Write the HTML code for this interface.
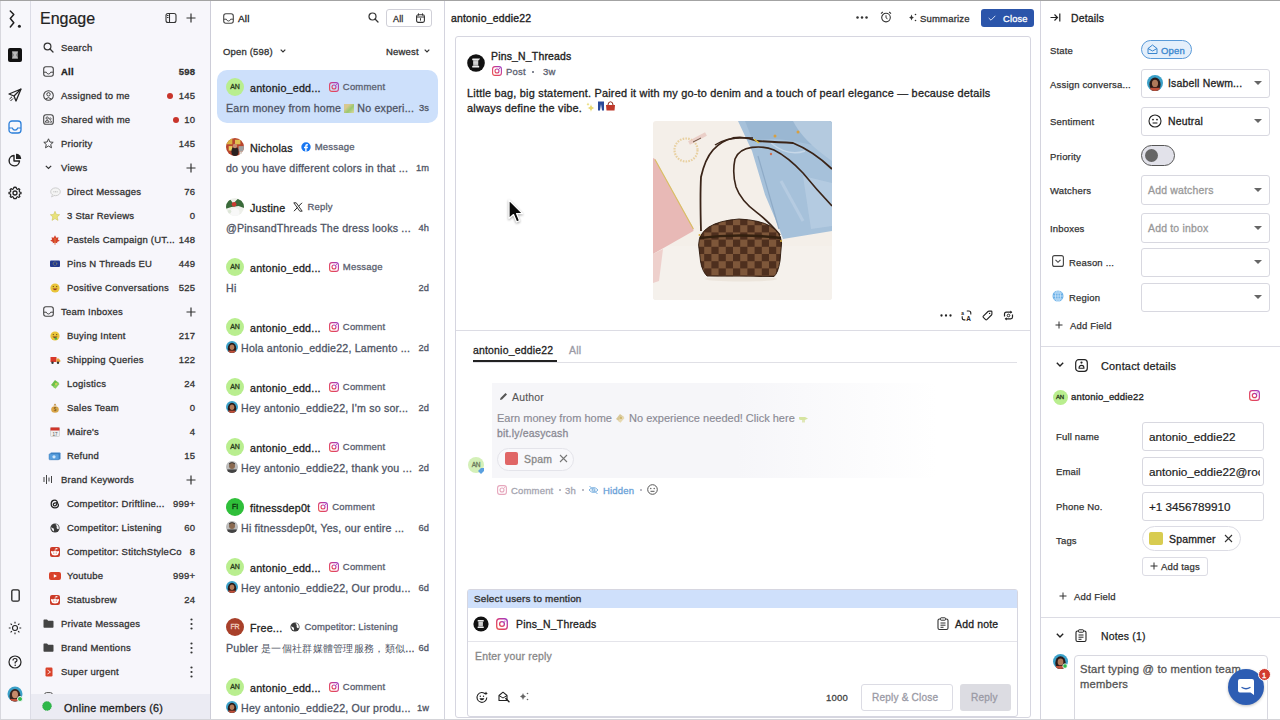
<!DOCTYPE html>
<html><head><meta charset="utf-8">
<style>
*{box-sizing:border-box}
html,body{margin:0;padding:0}
body{width:1280px;height:720px;overflow:hidden;position:relative;font-family:"Liberation Sans",sans-serif;color:#2a2a2e;background:#fff}
.a{position:absolute;white-space:nowrap}
.t{font-size:10px;line-height:12px;color:#333}
.a{-webkit-text-stroke:0.2px currentColor}
svg{display:block;overflow:visible}
.ic{position:absolute}
</style></head><body>
<div class="a" style="left:0;top:0;width:31px;height:720px;background:#f7f7fb;border-right:1px solid #dcdce6"></div>
<div class="a" style="left:31px;top:0;width:180px;height:720px;background:#f7f6fb;border-right:1px solid #cdcdd8"></div>
<div class="a" style="left:211px;top:0;width:234px;height:720px;background:#fff;border-right:1px solid #d4d4de"></div>
<div class="a" style="left:445px;top:0;width:596px;height:720px;background:#fff;border-right:1px solid #d4d4de"></div>
<div class="a" style="left:1041px;top:0;width:239px;height:720px;background:#fff"></div>
<svg width="0" height="0" style="position:absolute"><defs><linearGradient id="igg" x1="0" y1="1" x2="1" y2="0"><stop offset="0" stop-color="#e8504a"/><stop offset=".5" stop-color="#d83a78"/><stop offset="1" stop-color="#9a3ac8"/></linearGradient></defs></svg>
<svg class="ic" style="left:0px;top:0px" width="1" height="720" viewBox="0 0 1 720"><rect width="1" height="720" fill="#d8d8de"/></svg>
<svg class="ic" style="left:8px;top:10px" width="14" height="19" viewBox="0 0 14 19"><path d="M2.3 1L5.8 4.6L2.3 8.6L5.8 12.8L2.3 17" fill="none" stroke="#1f1f1f" stroke-width="1.5" stroke-linecap="round" stroke-linejoin="round"/><circle cx="11.4" cy="16.2" r="1.5" fill="#1f1f1f"/></svg>
<svg class="ic" style="left:8px;top:48px" width="14" height="14" viewBox="0 0 14 14"><rect x="0" y="0" width="14" height="14" rx="2" fill="#111"/><rect x="4" y="3.5" width="6" height="7" fill="#777"/><path d="M4 3.5H10L8 7L10 10.5H4L6 7Z" fill="#bbb"/></svg>
<svg class="ic" style="left:8px;top:88px" width="14" height="14" viewBox="0 0 14 14"><path d="M13 1L1 6L6 8L8 13Z" fill="none" stroke="#222" stroke-width="1.3" stroke-linejoin="round"/><path d="M13 1L6 8" stroke="#222" stroke-width="1.2"/><path d="M1.5 11L4 8.8M2.5 13L5 10.5" stroke="#222" stroke-width="1"/></svg>
<svg class="ic" style="left:8px;top:120px" width="14" height="14" viewBox="0 0 14 14"><rect x="1" y="1" width="12" height="12" rx="3" fill="none" stroke="#2b7fd9" stroke-width="1.3"/><path d="M1 8H4.3Q5 10.2 7 10.2Q9 10.2 9.7 8H13" fill="none" stroke="#2b7fd9" stroke-width="1.2"/></svg>
<svg class="ic" style="left:8px;top:153px" width="14" height="14" viewBox="0 0 14 14"><path d="M6 2.5A5.2 5.2 0 1 0 11.5 8H6Z" fill="none" stroke="#222" stroke-width="1.4" stroke-linejoin="round"/><path d="M8 0.8A5 5 0 0 1 13.2 6H8Z" fill="#222"/></svg>
<svg class="ic" style="left:8px;top:186px" width="14" height="14" viewBox="0 0 14 14"><circle cx="7" cy="7" r="2" fill="none" stroke="#222" stroke-width="1.3"/><path d="M7 1.2L8.2 1.4L8.5 2.8L9.7 3.4L10.9 2.6L11.8 3.5L11.2 4.8L11.6 6L13 6.3V7.7L11.6 8L11.2 9.3L11.9 10.5L10.9 11.4L9.7 10.7L8.5 11.2L8.2 12.6H5.8L5.5 11.2L4.3 10.6L3.1 11.4L2.2 10.5L2.8 9.2L2.4 8L1 7.7V6.3L2.4 6L2.8 4.8L2.1 3.5L3.1 2.6L4.3 3.4L5.5 2.8L5.8 1.4Z" fill="none" stroke="#222" stroke-width="1.2" stroke-linejoin="round"/></svg>
<svg class="ic" style="left:11px;top:589px" width="9" height="13" viewBox="0 0 9 13"><rect x="0.8" y="0.8" width="7.4" height="11.4" rx="1.5" fill="none" stroke="#222" stroke-width="1.3"/></svg>
<svg class="ic" style="left:8px;top:621px" width="14" height="14" viewBox="0 0 14 14"><circle cx="7" cy="7" r="2.5" fill="none" stroke="#222" stroke-width="1.1"/><path d="M7 0.8V2.6M7 11.4V13.2M0.8 7H2.6M11.4 7H13.2M2.6 2.6L3.9 3.9M10.1 10.1L11.4 11.4M2.6 11.4L3.9 10.1M10.1 3.9L11.4 2.6" stroke="#222" stroke-width="1.1"/></svg>
<svg class="ic" style="left:8px;top:655px" width="14" height="14" viewBox="0 0 14 14"><circle cx="7" cy="7" r="6" fill="none" stroke="#222" stroke-width="1.2"/><path d="M5 5.4Q5 3.5 7 3.5Q9 3.5 9 5.2Q9 6.4 7.2 7.1V8.4" fill="none" stroke="#222" stroke-width="1.2"/><circle cx="7.2" cy="10.3" r=".8" fill="#222"/></svg>
<svg class="ic" style="left:7px;top:686px" width="16" height="16" viewBox="0 0 16 16"><defs><clipPath id="avc"><circle cx="8" cy="8" r="7.5"/></clipPath></defs><g clip-path="url(#avc)"><rect width="16" height="16" fill="#3aa0c8"/><ellipse cx="8" cy="10" rx="5.5" ry="7" fill="#3a2420"/><ellipse cx="8" cy="8.5" rx="3" ry="3.8" fill="#c98a6a"/><rect x="3" y="13" width="10" height="4" fill="#c0503a"/></g><circle cx="13" cy="13" r="2.5" fill="#2fb84a" stroke="#f6f6fa" stroke-width="1"/></svg><div class="a" style="left:40px;top:10px;font-size:16px;line-height:18px;color:#222">Engage</div>
<svg class="ic" style="left:165px;top:12px" width="12" height="12" viewBox="0 0 12 12"><rect x="1" y="1.5" width="10" height="9" rx="2" fill="none" stroke="#333" stroke-width="1.1"/><line x1="4.5" y1="1.5" x2="4.5" y2="10.5" stroke="#333" stroke-width="1.1"/><rect x="2" y="3" width="1.5" height="1" fill="#333"/><rect x="2" y="5" width="1.5" height="1" fill="#333"/></svg>
<svg class="ic" style="left:186px;top:13px" width="10" height="10" viewBox="0 0 10 10"><path d="M5 0.5V9.5M0.5 5H9.5" stroke="#333" stroke-width="1.2"/></svg>
<svg class="ic" style="left:43px;top:42px" width="11" height="11" viewBox="0 0 11 11"><circle cx="4.5" cy="4.5" r="3.4" fill="none" stroke="#333" stroke-width="1.2"/><path d="M7 7L10 10" stroke="#333" stroke-width="1.3" stroke-linecap="round"/></svg>
<div class="a" style="left:61px;top:42.4px;font-size:9.5px;letter-spacing:0.24px;line-height:12px;color:#333;font-weight:normal;-webkit-text-stroke:0.3px #333;">Search</div>
<svg class="ic" style="left:43px;top:66px" width="11" height="11" viewBox="0 0 11 11"><rect x="0.7" y="0.7" width="9.6" height="9.6" rx="2.2" fill="none" stroke="#444" stroke-width="1.1"/><path d="M0.8 6.2H3.3Q4 8 5.5 8Q7 8 7.7 6.2H10.2" fill="none" stroke="#444" stroke-width="1"/></svg>
<div class="a" style="left:61px;top:66.4px;font-size:9.5px;letter-spacing:0.24px;line-height:12px;color:#222;font-weight:bold;-webkit-text-stroke:0.3px #222;">All</div>
<div class="a" style="left:135px;width:60px;text-align:right;top:66.4px;font-size:9.5px;letter-spacing:0.18px;margin-left:0.18px;line-height:12px;color:#333;font-weight:bold;-webkit-text-stroke:0.3px #333">598</div>
<svg class="ic" style="left:43px;top:90px" width="11" height="11" viewBox="0 0 11 11"><circle cx="5.5" cy="5.5" r="4.8" fill="none" stroke="#444" stroke-width="1.1"/><circle cx="5.5" cy="4.3" r="1.7" fill="none" stroke="#444" stroke-width="1"/><path d="M2.6 9Q5.5 6.2 8.4 9" fill="none" stroke="#444" stroke-width="1"/></svg>
<div class="a" style="left:61px;top:90.4px;font-size:9.5px;letter-spacing:0.24px;line-height:12px;color:#333;font-weight:normal;-webkit-text-stroke:0.3px #333;">Assigned to me</div>
<div class="a" style="left:167px;top:93px;width:6px;height:6px;border-radius:3px;background:#c8342b"></div>
<div class="a" style="left:135px;width:60px;text-align:right;top:90.4px;font-size:9.5px;letter-spacing:0.18px;margin-left:0.18px;line-height:12px;color:#333;font-weight:normal;-webkit-text-stroke:0.3px #333">145</div>
<svg class="ic" style="left:43px;top:114px" width="11" height="11" viewBox="0 0 11 11"><rect x="0.7" y="0.7" width="9.6" height="9.6" rx="2.4" fill="none" stroke="#444" stroke-width="1.1"/><circle cx="4.2" cy="4.1" r="1.2" fill="none" stroke="#444" stroke-width=".9"/><path d="M2.3 8.2Q2.3 6.4 4.2 6.4Q6.1 6.4 6.1 8.2Z" fill="none" stroke="#444" stroke-width=".9"/><circle cx="7.3" cy="4.8" r=".9" fill="none" stroke="#444" stroke-width=".8"/><path d="M6.8 8.2H8.6Q8.6 6.6 7.3 6.6" fill="none" stroke="#444" stroke-width=".8"/></svg>
<div class="a" style="left:61px;top:114.4px;font-size:9.5px;letter-spacing:0.24px;line-height:12px;color:#333;font-weight:normal;-webkit-text-stroke:0.3px #333;">Shared with me</div>
<div class="a" style="left:173px;top:117px;width:6px;height:6px;border-radius:3px;background:#c8342b"></div>
<div class="a" style="left:135px;width:60px;text-align:right;top:114.4px;font-size:9.5px;letter-spacing:0.18px;margin-left:0.18px;line-height:12px;color:#333;font-weight:normal;-webkit-text-stroke:0.3px #333">10</div>
<svg class="ic" style="left:43px;top:138px" width="11" height="11" viewBox="0 0 11 11"><path d="M5.5 0.8L6.9 4L10.2 4.3L7.7 6.5L8.5 9.8L5.5 8L2.5 9.8L3.3 6.5L0.8 4.3L4.1 4Z" fill="none" stroke="#444" stroke-width="1" stroke-linejoin="round"/></svg>
<div class="a" style="left:61px;top:138.4px;font-size:9.5px;letter-spacing:0.24px;line-height:12px;color:#333;font-weight:normal;-webkit-text-stroke:0.3px #333;">Priority</div>
<div class="a" style="left:135px;width:60px;text-align:right;top:138.4px;font-size:9.5px;letter-spacing:0.18px;margin-left:0.18px;line-height:12px;color:#333;font-weight:normal;-webkit-text-stroke:0.3px #333">145</div>
<svg class="ic" style="left:45px;top:165px" width="7" height="5" viewBox="0 0 7 5"><path d="M0.8 0.8L3.5 3.5L6.2 0.8" fill="none" stroke="#333" stroke-width="1.2"/></svg>
<div class="a" style="left:61px;top:162.4px;font-size:9.5px;letter-spacing:0.24px;line-height:12px;color:#333;font-weight:normal;-webkit-text-stroke:0.3px #333;">Views</div>
<svg class="ic" style="left:186px;top:163px" width="10" height="10" viewBox="0 0 10 10"><path d="M5 0.5V9.5M0.5 5H9.5" stroke="#333" stroke-width="1.2"/></svg>
<svg class="ic" style="left:50px;top:187px" width="11" height="11" viewBox="0 0 11 11"><ellipse cx="5.5" cy="4.8" rx="4.8" ry="3.9" fill="#f4f4f4" stroke="#c4c4c4" stroke-width="0.8"/><path d="M2.5 7.6L1.5 10L4.5 8.4" fill="#f4f4f4" stroke="#c4c4c4" stroke-width=".7"/><path d="M3.5 4.8H7.5" stroke="#999" stroke-width=".8" stroke-dasharray=".8 .8"/></svg>
<div class="a" style="left:67px;top:186.4px;font-size:9.5px;letter-spacing:0.24px;line-height:12px;color:#333;font-weight:normal;-webkit-text-stroke:0.3px #333;">Direct Messages</div>
<div class="a" style="left:135px;width:60px;text-align:right;top:186.4px;font-size:9.5px;letter-spacing:0.18px;margin-left:0.18px;line-height:12px;color:#333;font-weight:normal;-webkit-text-stroke:0.3px #333">76</div>
<svg class="ic" style="left:50px;top:211px" width="10" height="10" viewBox="0 0 10 10"><path d="M5 0.3L6.4 3.4L9.7 3.7L7.2 5.9L8 9.4L5 7.6L2 9.4L2.8 5.9L0.3 3.7L3.6 3.4Z" fill="#e9e27a" stroke="#c7bf4a" stroke-width="0.5"/></svg>
<div class="a" style="left:67px;top:210.4px;font-size:9.5px;letter-spacing:0.24px;line-height:12px;color:#333;font-weight:normal;-webkit-text-stroke:0.3px #333;">3 Star Reviews</div>
<div class="a" style="left:135px;width:60px;text-align:right;top:210.4px;font-size:9.5px;letter-spacing:0.18px;margin-left:0.18px;line-height:12px;color:#333;font-weight:normal;-webkit-text-stroke:0.3px #333">0</div>
<svg class="ic" style="left:50px;top:235px" width="10" height="10" viewBox="0 0 10 10"><path d="M5 0.3L6.4 2.8L8.5 2.2L7.9 4.6L9.8 5.8L7 7L7.5 8.2L5.4 7.8V9.8H4.6V7.8L2.5 8.2L3 7L0.2 5.8L2.1 4.6L1.5 2.2L3.6 2.8Z" fill="#d4402a"/><path d="M5 3L5 8" stroke="#e8a040" stroke-width=".6"/></svg>
<div class="a" style="left:67px;top:234.4px;font-size:9.5px;letter-spacing:0.24px;line-height:12px;color:#333;font-weight:normal;-webkit-text-stroke:0.3px #333;">Pastels Campaign (UT...</div>
<div class="a" style="left:135px;width:60px;text-align:right;top:234.4px;font-size:9.5px;letter-spacing:0.18px;margin-left:0.18px;line-height:12px;color:#333;font-weight:normal;-webkit-text-stroke:0.3px #333">148</div>
<svg class="ic" style="left:50px;top:260px" width="10" height="7" viewBox="0 0 10 7"><rect x="0" y="0.5" width="10" height="6.5" rx="1" fill="#233a8f"/><circle cx="5" cy="3.7" r="1.8" fill="none" stroke="#e8d440" stroke-width="0.6" stroke-dasharray="0.6 0.6"/></svg>
<div class="a" style="left:67px;top:258.4px;font-size:9.5px;letter-spacing:0.24px;line-height:12px;color:#333;font-weight:normal;-webkit-text-stroke:0.3px #333;">Pins N Threads EU</div>
<div class="a" style="left:135px;width:60px;text-align:right;top:258.4px;font-size:9.5px;letter-spacing:0.18px;margin-left:0.18px;line-height:12px;color:#333;font-weight:normal;-webkit-text-stroke:0.3px #333">449</div>
<svg class="ic" style="left:50px;top:283px" width="10" height="10" viewBox="0 0 10 10"><circle cx="5" cy="5" r="4.6" fill="#e9c43a"/><path d="M2.5 5.5Q5 9 7.5 5.5" fill="#9a3a1f"/><circle cx="3.3" cy="3.6" r=".6" fill="#5a3a10"/><circle cx="6.7" cy="3.6" r=".6" fill="#5a3a10"/></svg>
<div class="a" style="left:67px;top:282.4px;font-size:9.5px;letter-spacing:0.24px;line-height:12px;color:#333;font-weight:normal;-webkit-text-stroke:0.3px #333;">Positive Conversations</div>
<div class="a" style="left:135px;width:60px;text-align:right;top:282.4px;font-size:9.5px;letter-spacing:0.18px;margin-left:0.18px;line-height:12px;color:#333;font-weight:normal;-webkit-text-stroke:0.3px #333">525</div>
<svg class="ic" style="left:43px;top:306px" width="11" height="11" viewBox="0 0 11 11"><rect x="0.7" y="0.7" width="9.6" height="9.6" rx="2.2" fill="none" stroke="#444" stroke-width="1.1"/><path d="M0.8 6.2H3.3Q4 8 5.5 8Q7 8 7.7 6.2H10.2" fill="none" stroke="#444" stroke-width="1"/></svg>
<div class="a" style="left:61px;top:306.4px;font-size:9.5px;letter-spacing:0.24px;line-height:12px;color:#333;font-weight:normal;-webkit-text-stroke:0.3px #333;">Team Inboxes</div>
<svg class="ic" style="left:186px;top:307px" width="10" height="10" viewBox="0 0 10 10"><path d="M5 0.5V9.5M0.5 5H9.5" stroke="#333" stroke-width="1.2"/></svg>
<svg class="ic" style="left:50px;top:331px" width="10" height="10" viewBox="0 0 10 10"><circle cx="5" cy="5" r="4.6" fill="#e9c43a"/><path d="M2.5 5.5Q5 8.5 7.5 5.5Z" fill="#7a3a1f"/><ellipse cx="5.8" cy="7.6" rx="1.3" ry="1.2" fill="#4bb04b"/><circle cx="3.3" cy="3.6" r=".6" fill="#5a3a10"/><circle cx="6.7" cy="3.6" r=".6" fill="#5a3a10"/></svg>
<div class="a" style="left:67px;top:330.4px;font-size:9.5px;letter-spacing:0.24px;line-height:12px;color:#333;font-weight:normal;-webkit-text-stroke:0.3px #333;">Buying Intent</div>
<div class="a" style="left:135px;width:60px;text-align:right;top:330.4px;font-size:9.5px;letter-spacing:0.18px;margin-left:0.18px;line-height:12px;color:#333;font-weight:normal;-webkit-text-stroke:0.3px #333">217</div>
<svg class="ic" style="left:50px;top:355px" width="11" height="10" viewBox="0 0 11 10"><rect x="0.5" y="2" width="6" height="5" fill="#d8382a"/><path d="M6.5 3.5H8.8L10.3 5.5V7H6.5Z" fill="#e8a33a"/><circle cx="2.5" cy="7.8" r="1.2" fill="#333"/><circle cx="8" cy="7.8" r="1.2" fill="#333"/></svg>
<div class="a" style="left:67px;top:354.4px;font-size:9.5px;letter-spacing:0.24px;line-height:12px;color:#333;font-weight:normal;-webkit-text-stroke:0.3px #333;">Shipping Queries</div>
<div class="a" style="left:135px;width:60px;text-align:right;top:354.4px;font-size:9.5px;letter-spacing:0.18px;margin-left:0.18px;line-height:12px;color:#333;font-weight:normal;-webkit-text-stroke:0.3px #333">122</div>
<svg class="ic" style="left:50px;top:379px" width="10" height="10" viewBox="0 0 10 10"><path d="M1 6L5 1L9 4L5 9Z" fill="#6cbf4a"/><path d="M3 8L7 3L9.5 5L5.5 9.7Z" fill="#8bd060"/><circle cx="6" cy="5" r="1" fill="#e0d050"/></svg>
<div class="a" style="left:67px;top:378.4px;font-size:9.5px;letter-spacing:0.24px;line-height:12px;color:#333;font-weight:normal;-webkit-text-stroke:0.3px #333;">Logistics</div>
<div class="a" style="left:135px;width:60px;text-align:right;top:378.4px;font-size:9.5px;letter-spacing:0.18px;margin-left:0.18px;line-height:12px;color:#333;font-weight:normal;-webkit-text-stroke:0.3px #333">24</div>
<svg class="ic" style="left:50px;top:403px" width="10" height="10" viewBox="0 0 10 10"><path d="M3.5 2.5L5 0.5L6.5 2.5Z" fill="#b9832f"/><ellipse cx="5" cy="6.5" rx="3.8" ry="3.3" fill="#d9a64a"/><text x="5" y="8.3" font-size="4.5" text-anchor="middle" fill="#6a4a10" font-family="Liberation Sans">$</text></svg>
<div class="a" style="left:67px;top:402.4px;font-size:9.5px;letter-spacing:0.24px;line-height:12px;color:#333;font-weight:normal;-webkit-text-stroke:0.3px #333;">Sales Team</div>
<div class="a" style="left:135px;width:60px;text-align:right;top:402.4px;font-size:9.5px;letter-spacing:0.18px;margin-left:0.18px;line-height:12px;color:#333;font-weight:normal;-webkit-text-stroke:0.3px #333">0</div>
<svg class="ic" style="left:50px;top:427px" width="10" height="10" viewBox="0 0 10 10"><rect x="0.5" y="0.5" width="9" height="9" rx="1" fill="#eee" stroke="#bbb" stroke-width=".5"/><rect x="0.5" y="0.5" width="9" height="3" fill="#d0352a"/><text x="5" y="8.6" font-size="4.5" text-anchor="middle" fill="#555" font-family="Liberation Sans">17</text></svg>
<div class="a" style="left:67px;top:426.4px;font-size:9.5px;letter-spacing:0.24px;line-height:12px;color:#333;font-weight:normal;-webkit-text-stroke:0.3px #333;">Maire's</div>
<div class="a" style="left:135px;width:60px;text-align:right;top:426.4px;font-size:9.5px;letter-spacing:0.18px;margin-left:0.18px;line-height:12px;color:#333;font-weight:normal;-webkit-text-stroke:0.3px #333">4</div>
<svg class="ic" style="left:49px;top:452px" width="12" height="8" viewBox="0 0 12 8"><rect x="1.5" y="0.5" width="10" height="7" rx="0.8" fill="#3f84c9"/><rect x="0" y="1.8" width="10" height="6" rx="0.8" fill="#5aa0df" stroke="#2a6aa9" stroke-width=".4"/><circle cx="5" cy="4.8" r="1.6" fill="#cfe6fb"/></svg>
<div class="a" style="left:67px;top:450.4px;font-size:9.5px;letter-spacing:0.24px;line-height:12px;color:#333;font-weight:normal;-webkit-text-stroke:0.3px #333;">Refund</div>
<div class="a" style="left:135px;width:60px;text-align:right;top:450.4px;font-size:9.5px;letter-spacing:0.18px;margin-left:0.18px;line-height:12px;color:#333;font-weight:normal;-webkit-text-stroke:0.3px #333">15</div>
<svg class="ic" style="left:43px;top:474px" width="11" height="11" viewBox="0 0 11 11"><path d="M1 3V8M3.5 1V10M6 3.5V7.5M8.5 2V9" stroke="#444" stroke-width="1"/></svg>
<div class="a" style="left:61px;top:474.4px;font-size:9.5px;letter-spacing:0.24px;line-height:12px;color:#333;font-weight:normal;-webkit-text-stroke:0.3px #333;">Brand Keywords</div>
<svg class="ic" style="left:186px;top:475px" width="10" height="10" viewBox="0 0 10 10"><path d="M5 0.5V9.5M0.5 5H9.5" stroke="#333" stroke-width="1.2"/></svg>
<svg class="ic" style="left:50px;top:499px" width="10" height="10" viewBox="0 0 10 10"><path d="M7.6 4.2C7.2 2.2 6 1.2 4.9 1.2C2.6 1.2 1.2 2.9 1.2 5C1.2 7.4 2.7 8.8 5 8.8C7 8.8 8.4 7.6 8.4 6C8.4 4.4 6.9 3.8 5.3 3.9C4 4 3.2 4.8 3.3 5.7C3.4 6.5 4.2 6.9 5 6.8C6.4 6.7 6.9 5.4 6.7 3.2" fill="none" stroke="#222" stroke-width="1.3"/></svg>
<div class="a" style="left:67px;top:498.4px;font-size:9.5px;letter-spacing:0.24px;line-height:12px;color:#333;font-weight:normal;-webkit-text-stroke:0.3px #333;">Competitor: Driftline...</div>
<div class="a" style="left:135px;width:60px;text-align:right;top:498.4px;font-size:9.5px;letter-spacing:0.18px;margin-left:0.18px;line-height:12px;color:#333;font-weight:normal;-webkit-text-stroke:0.3px #333">999+</div>
<svg class="ic" style="left:50px;top:523px" width="10" height="10" viewBox="0 0 10 10"><circle cx="5" cy="5" r="4.6" fill="#3a3a3a"/><path d="M5.5 1.5Q7 2.5 6.8 4Q6 5 7.5 6Q8.5 6.5 8.9 5.2Q9 2.5 7 1.2Z" fill="#f0f0f4"/><path d="M1.5 4Q2.5 5.5 3.5 5.3Q4.5 6.5 3.8 8.5Q2 7.5 1.4 5.5Z" fill="#f0f0f4"/></svg>
<div class="a" style="left:67px;top:522.4px;font-size:9.5px;letter-spacing:0.24px;line-height:12px;color:#333;font-weight:normal;-webkit-text-stroke:0.3px #333;">Competitor: Listening</div>
<div class="a" style="left:135px;width:60px;text-align:right;top:522.4px;font-size:9.5px;letter-spacing:0.18px;margin-left:0.18px;line-height:12px;color:#333;font-weight:normal;-webkit-text-stroke:0.3px #333">60</div>
<svg class="ic" style="left:50px;top:547px" width="10" height="10" viewBox="0 0 10 10"><rect x="0" y="0" width="10" height="10" rx="2" fill="#cc3b28"/><ellipse cx="5" cy="6.2" rx="3.4" ry="2.2" fill="#fff"/><circle cx="1.8" cy="5" r=".9" fill="#fff"/><circle cx="8.2" cy="5" r=".9" fill="#fff"/><circle cx="3.8" cy="6" r=".6" fill="#cc3b28"/><circle cx="6.2" cy="6" r=".6" fill="#cc3b28"/><circle cx="6.8" cy="1.8" r=".8" fill="#fff"/><path d="M5 4L5.5 1.6L6.8 1.8" fill="none" stroke="#fff" stroke-width=".6"/></svg>
<div class="a" style="left:67px;top:546.4px;font-size:9.5px;letter-spacing:0.24px;line-height:12px;color:#333;font-weight:normal;-webkit-text-stroke:0.3px #333;">Competitor: StitchStyleCo</div>
<div class="a" style="left:135px;width:60px;text-align:right;top:546.4px;font-size:9.5px;letter-spacing:0.18px;margin-left:0.18px;line-height:12px;color:#333;font-weight:normal;-webkit-text-stroke:0.3px #333">8</div>
<svg class="ic" style="left:49px;top:572px" width="12" height="8" viewBox="0 0 12 8"><rect x="0" y="0" width="12" height="8" rx="2" fill="#d9412a"/><path d="M4.8 2.2L8 4L4.8 5.8Z" fill="#fff"/></svg>
<div class="a" style="left:67px;top:570.4px;font-size:9.5px;letter-spacing:0.24px;line-height:12px;color:#333;font-weight:normal;-webkit-text-stroke:0.3px #333;">Youtube</div>
<div class="a" style="left:135px;width:60px;text-align:right;top:570.4px;font-size:9.5px;letter-spacing:0.18px;margin-left:0.18px;line-height:12px;color:#333;font-weight:normal;-webkit-text-stroke:0.3px #333">999+</div>
<svg class="ic" style="left:50px;top:595px" width="10" height="10" viewBox="0 0 10 10"><rect x="0" y="0" width="10" height="10" rx="2" fill="#cc3b28"/><ellipse cx="5" cy="6.2" rx="3.4" ry="2.2" fill="#fff"/><circle cx="1.8" cy="5" r=".9" fill="#fff"/><circle cx="8.2" cy="5" r=".9" fill="#fff"/><circle cx="3.8" cy="6" r=".6" fill="#cc3b28"/><circle cx="6.2" cy="6" r=".6" fill="#cc3b28"/><circle cx="6.8" cy="1.8" r=".8" fill="#fff"/><path d="M5 4L5.5 1.6L6.8 1.8" fill="none" stroke="#fff" stroke-width=".6"/></svg>
<div class="a" style="left:67px;top:594.4px;font-size:9.5px;letter-spacing:0.24px;line-height:12px;color:#333;font-weight:normal;-webkit-text-stroke:0.3px #333;">Statusbrew</div>
<div class="a" style="left:135px;width:60px;text-align:right;top:594.4px;font-size:9.5px;letter-spacing:0.18px;margin-left:0.18px;line-height:12px;color:#333;font-weight:normal;-webkit-text-stroke:0.3px #333">24</div>
<svg class="ic" style="left:43px;top:619px" width="11" height="9" viewBox="0 0 11 9"><path d="M0.5 1.2Q0.5 0.5 1.2 0.5H4L5.2 1.8H9.8Q10.5 1.8 10.5 2.5V8Q10.5 8.7 9.8 8.7H1.2Q0.5 8.7 0.5 8Z" fill="#444"/></svg>
<div class="a" style="left:61px;top:618.4px;font-size:9.5px;letter-spacing:0.24px;line-height:12px;color:#333;font-weight:normal;-webkit-text-stroke:0.3px #333;">Private Messages</div>
<svg class="ic" style="left:190px;top:618px" width="3" height="12" viewBox="0 0 3 12"><circle cx="1.5" cy="1.5" r="1.1" fill="#333"/><circle cx="1.5" cy="6" r="1.1" fill="#333"/><circle cx="1.5" cy="10.5" r="1.1" fill="#333"/></svg>
<svg class="ic" style="left:43px;top:643px" width="11" height="9" viewBox="0 0 11 9"><path d="M0.5 1.2Q0.5 0.5 1.2 0.5H4L5.2 1.8H9.8Q10.5 1.8 10.5 2.5V8Q10.5 8.7 9.8 8.7H1.2Q0.5 8.7 0.5 8Z" fill="#444"/></svg>
<div class="a" style="left:61px;top:642.4px;font-size:9.5px;letter-spacing:0.24px;line-height:12px;color:#333;font-weight:normal;-webkit-text-stroke:0.3px #333;">Brand Mentions</div>
<svg class="ic" style="left:190px;top:642px" width="3" height="12" viewBox="0 0 3 12"><circle cx="1.5" cy="1.5" r="1.1" fill="#333"/><circle cx="1.5" cy="6" r="1.1" fill="#333"/><circle cx="1.5" cy="10.5" r="1.1" fill="#333"/></svg>
<svg class="ic" style="left:45px;top:667px" width="8" height="10" viewBox="0 0 8 10"><rect x="0.5" y="0.5" width="7" height="9" rx="1.2" fill="#d9412a"/><path d="M2.5 3L5.5 5L2.5 7" fill="none" stroke="#fff" stroke-width=".8"/></svg>
<div class="a" style="left:61px;top:666.4px;font-size:9.5px;letter-spacing:0.24px;line-height:12px;color:#333;font-weight:normal;-webkit-text-stroke:0.3px #333;">Super urgent</div>
<svg class="ic" style="left:190px;top:666px" width="3" height="12" viewBox="0 0 3 12"><circle cx="1.5" cy="1.5" r="1.1" fill="#333"/><circle cx="1.5" cy="6" r="1.1" fill="#333"/><circle cx="1.5" cy="10.5" r="1.1" fill="#333"/></svg>
<svg class="ic" style="left:44px;top:692px" width="9" height="9" viewBox="0 0 9 9"><rect x="0.6" y="0.6" width="7.8" height="7.8" rx="2" fill="none" stroke="#555" stroke-width="1"/></svg>
<div class="a" style="left:61px;top:693.4px;font-size:9.5px;letter-spacing:0.24px;line-height:12px;color:#444;font-weight:normal;-webkit-text-stroke:0.3px #444;">Sensitive</div>
<div class="a" style="left:31px;top:694px;width:179px;height:25px;background:#ebebf3"></div>
<svg class="ic" style="left:42px;top:701px" width="10" height="10" viewBox="0 0 10 10"><circle cx="5" cy="5" r="4.5" fill="#2fb84a"/><circle cx="5" cy="5" r="4.5" fill="none" stroke="#1e9a38" stroke-width=".6" stroke-dasharray="1 1"/></svg>
<div class="a" style="left:64px;top:701.9px;font-size:10.735px;letter-spacing:0.24px;line-height:12px;color:#222;font-weight:normal;-webkit-text-stroke:0.3px #222;">Online members (6)</div><svg class="ic" style="left:223px;top:13px" width="11" height="11" viewBox="0 0 11 11"><rect x="0.7" y="0.7" width="9.6" height="9.6" rx="2.2" fill="none" stroke="#444" stroke-width="1.1"/><path d="M0.8 6.2H3.3Q4 8 5.5 8Q7 8 7.7 6.2H10.2" fill="none" stroke="#444" stroke-width="1"/></svg>
<div class="a" style="left:238px;top:12.9px;font-size:9.97px;letter-spacing:0.189px;line-height:12px;color:#222;font-weight:normal;-webkit-text-stroke:0.3px #222;">All</div>
<svg class="ic" style="left:368px;top:12px" width="11" height="11" viewBox="0 0 11 11"><circle cx="4.5" cy="4.5" r="3.5" fill="none" stroke="#333" stroke-width="1.2"/><path d="M7 7L10 10" stroke="#333" stroke-width="1.3" stroke-linecap="round"/></svg>
<div class="a" style="left:386px;top:9px;width:46px;height:18px;border:1px solid #d0d0d8;border-radius:3px;background:#fff"></div>
<div class="a" style="left:393px;top:12.9px;font-size:9.03px;letter-spacing:0.171px;line-height:12px;color:#333;font-weight:normal;-webkit-text-stroke:0.3px #333;">All</div>
<svg class="ic" style="left:416px;top:13px" width="9" height="10" viewBox="0 0 9 10"><rect x="0.6" y="1.8" width="7.8" height="7.6" rx="1.6" fill="none" stroke="#333" stroke-width="1.1"/><path d="M2.5 0.4V2.6M6.5 0.4V2.6M0.8 4H8.2" stroke="#333" stroke-width="1"/><path d="M4.5 5.2V7.6" stroke="#333" stroke-width="1"/></svg>
<div class="a" style="left:223px;top:45.9px;font-size:9.5px;letter-spacing:0.18px;line-height:12px;color:#333;font-weight:normal;-webkit-text-stroke:0.3px #333;">Open (598)</div>
<svg class="ic" style="left:280px;top:49px" width="6" height="4" viewBox="0 0 6 4"><path d="M0.7 0.7L3 3L5.3 0.7" fill="none" stroke="#333" stroke-width="1.2"/></svg>
<div class="a" style="left:386px;top:45.9px;font-size:9.5px;letter-spacing:0.18px;line-height:12px;color:#333;font-weight:normal;-webkit-text-stroke:0.3px #333;">Newest</div>
<svg class="ic" style="left:424px;top:49px" width="6" height="4" viewBox="0 0 6 4"><path d="M0.7 0.7L3 3L5.3 0.7" fill="none" stroke="#333" stroke-width="1.2"/></svg>
<div class="a" style="left:217px;top:70px;width:221px;height:53px;background:#cde0fb;border-radius:10px"></div>
<div class="a" style="left:226px;top:78px;width:18px;height:18px;border-radius:50%;background:#b9ee8f;color:#2a3a1a;font-size:7px;line-height:18px;text-align:center;letter-spacing:-0.2px;-webkit-text-stroke:0.3px #2a3a1a">AN</div>
<div class="a" style="left:250px;top:81.9px;font-size:10.73px;letter-spacing:0.203px;line-height:12px;color:#222;font-weight:normal;-webkit-text-stroke:0.3px #222;-webkit-text-stroke:0.3px #222">antonio_edd...</div>
<svg class="ic" style="left:328.846875px;top:82px" width="10" height="10" viewBox="0 0 10 10"><rect x="0.6" y="0.6" width="8.8" height="8.8" rx="2.4" fill="none" stroke="url(#igg)" stroke-width="1.1"/><circle cx="5" cy="5" r="2" fill="none" stroke="url(#igg)" stroke-width="1.1"/><circle cx="7.4" cy="2.6" r=".55" fill="#b03aa0"/></svg>
<div class="a" style="left:342.846875px;top:81.4px;font-size:9.5px;letter-spacing:0.18px;line-height:12px;color:#5b6170;font-weight:normal;-webkit-text-stroke:0.3px #5b6170;">Comment</div>
<div class="a" style="left:226px;top:101.9px;font-size:10.64px;letter-spacing:0.202px;line-height:12px;color:#4f5565;font-weight:normal;-webkit-text-stroke:0.3px #4f5565;width:188px;overflow:hidden">Earn money from home <span style="display:inline-block;width:10px;height:9px;vertical-align:-1px;background:linear-gradient(135deg,#d8c890 30%,#9ac870 60%,#e0d8a0)"></span> No experi...</div>
<div class="a" style="left:369.176px;width:60px;text-align:right;top:101.9px;font-size:9.31px;letter-spacing:0.176px;line-height:12px;color:#4f5565;font-weight:normal;-webkit-text-stroke:0.3px #4f5565">3s</div>
<svg class="ic" style="left:226px;top:138px" width="18" height="18" viewBox="0 0 20 20"><defs><clipPath id="cnich147"><circle cx="10" cy="10" r="10"/></clipPath></defs><g clip-path="url(#cnich147)"><rect width="20" height="20" fill="#b8452e"/><rect x="0" y="0" width="7" height="7" fill="#d8b040"/><rect x="10" y="2" width="6" height="5" fill="#e0c050"/><rect x="3" y="9" width="4" height="5" fill="#e8d060"/><rect x="14" y="9" width="6" height="6" fill="#a0a0a0"/><ellipse cx="10" cy="15" rx="4" ry="6" fill="#2a2020"/><circle cx="10" cy="9" r="2.5" fill="#c89070"/><rect x="15" y="15" width="5" height="5" fill="#d8d8d0"/></g></svg>
<div class="a" style="left:250px;top:141.9px;font-size:10.73px;letter-spacing:0.203px;line-height:12px;color:#222;font-weight:normal;-webkit-text-stroke:0.3px #222;-webkit-text-stroke:0.3px #222">Nicholas</div>
<svg class="ic" style="left:300.7875px;top:142px" width="10" height="10" viewBox="0 0 10 10"><circle cx="5" cy="5" r="4.7" fill="#1877f2"/><path d="M5.6 9.7V6.2H6.8L7 4.8H5.6V4Q5.6 3.4 6.2 3.4H7V2.2Q6.5 2.1 5.9 2.1Q4.2 2.1 4.2 3.8V4.8H3V6.2H4.2V9.7Z" fill="#fff"/></svg>
<div class="a" style="left:314.7875px;top:141.4px;font-size:9.5px;letter-spacing:0.18px;line-height:12px;color:#5b6170;font-weight:normal;-webkit-text-stroke:0.3px #5b6170;">Message</div>
<div class="a" style="left:226px;top:161.9px;font-size:10.64px;letter-spacing:0.202px;line-height:12px;color:#4f5565;font-weight:normal;-webkit-text-stroke:0.3px #4f5565;width:188px;overflow:hidden">do you have different colors in that ...</div>
<div class="a" style="left:369.176px;width:60px;text-align:right;top:161.9px;font-size:9.31px;letter-spacing:0.176px;line-height:12px;color:#4f5565;font-weight:normal;-webkit-text-stroke:0.3px #4f5565">1m</div>
<svg class="ic" style="left:226px;top:198px" width="18" height="18" viewBox="0 0 20 20"><defs><clipPath id="cjust207"><circle cx="10" cy="10" r="10"/></clipPath></defs><g clip-path="url(#cjust207)"><rect width="20" height="20" fill="#eef0ea"/><path d="M0 4L5 2L8 6L13 1L20 4V11L14 9L6 10L0 12Z" fill="#3a6a3a"/><circle cx="9" cy="7" r="2.6" fill="#c83a30"/><ellipse cx="10" cy="16" rx="5" ry="5" fill="#f8f8f8"/><circle cx="4" cy="15" r="2" fill="#dde6d8"/></g></svg>
<div class="a" style="left:250px;top:201.9px;font-size:10.73px;letter-spacing:0.203px;line-height:12px;color:#222;font-weight:normal;-webkit-text-stroke:0.3px #222;-webkit-text-stroke:0.3px #222">Justine</div>
<svg class="ic" style="left:293.43125px;top:202px" width="10" height="10" viewBox="0 0 10 10"><path d="M0.8 0.8H3.2L9.2 9.2H6.8Z" fill="none" stroke="#222" stroke-width=".9"/><path d="M1 9.2L4.6 5.3M5.5 4.3L9 0.8" stroke="#222" stroke-width="1"/></svg>
<div class="a" style="left:307.43125px;top:201.4px;font-size:9.5px;letter-spacing:0.18px;line-height:12px;color:#5b6170;font-weight:normal;-webkit-text-stroke:0.3px #5b6170;">Reply</div>
<div class="a" style="left:226px;top:221.9px;font-size:10.64px;letter-spacing:0.202px;line-height:12px;color:#4f5565;font-weight:normal;-webkit-text-stroke:0.3px #4f5565;width:188px;overflow:hidden">@PinsandThreads The dress looks ...</div>
<div class="a" style="left:369.176px;width:60px;text-align:right;top:221.9px;font-size:9.31px;letter-spacing:0.176px;line-height:12px;color:#4f5565;font-weight:normal;-webkit-text-stroke:0.3px #4f5565">4h</div>
<div class="a" style="left:226px;top:258px;width:18px;height:18px;border-radius:50%;background:#b9ee8f;color:#2a3a1a;font-size:7px;line-height:18px;text-align:center;letter-spacing:-0.2px;-webkit-text-stroke:0.3px #2a3a1a">AN</div>
<div class="a" style="left:250px;top:261.9px;font-size:10.73px;letter-spacing:0.203px;line-height:12px;color:#222;font-weight:normal;-webkit-text-stroke:0.3px #222;-webkit-text-stroke:0.3px #222">antonio_edd...</div>
<svg class="ic" style="left:328.846875px;top:262px" width="10" height="10" viewBox="0 0 10 10"><rect x="0.6" y="0.6" width="8.8" height="8.8" rx="2.4" fill="none" stroke="url(#igg)" stroke-width="1.1"/><circle cx="5" cy="5" r="2" fill="none" stroke="url(#igg)" stroke-width="1.1"/><circle cx="7.4" cy="2.6" r=".55" fill="#b03aa0"/></svg>
<div class="a" style="left:342.846875px;top:261.4px;font-size:9.5px;letter-spacing:0.18px;line-height:12px;color:#5b6170;font-weight:normal;-webkit-text-stroke:0.3px #5b6170;">Message</div>
<div class="a" style="left:226px;top:281.9px;font-size:10.64px;letter-spacing:0.202px;line-height:12px;color:#4f5565;font-weight:normal;-webkit-text-stroke:0.3px #4f5565;width:188px;overflow:hidden">Hi</div>
<div class="a" style="left:369.176px;width:60px;text-align:right;top:281.9px;font-size:9.31px;letter-spacing:0.176px;line-height:12px;color:#4f5565;font-weight:normal;-webkit-text-stroke:0.3px #4f5565">2d</div>
<div class="a" style="left:226px;top:318px;width:18px;height:18px;border-radius:50%;background:#b9ee8f;color:#2a3a1a;font-size:7px;line-height:18px;text-align:center;letter-spacing:-0.2px;-webkit-text-stroke:0.3px #2a3a1a">AN</div>
<div class="a" style="left:250px;top:321.9px;font-size:10.73px;letter-spacing:0.203px;line-height:12px;color:#222;font-weight:normal;-webkit-text-stroke:0.3px #222;-webkit-text-stroke:0.3px #222">antonio_edd...</div>
<svg class="ic" style="left:328.846875px;top:322px" width="10" height="10" viewBox="0 0 10 10"><rect x="0.6" y="0.6" width="8.8" height="8.8" rx="2.4" fill="none" stroke="url(#igg)" stroke-width="1.1"/><circle cx="5" cy="5" r="2" fill="none" stroke="url(#igg)" stroke-width="1.1"/><circle cx="7.4" cy="2.6" r=".55" fill="#b03aa0"/></svg>
<div class="a" style="left:342.846875px;top:321.4px;font-size:9.5px;letter-spacing:0.18px;line-height:12px;color:#5b6170;font-weight:normal;-webkit-text-stroke:0.3px #5b6170;">Comment</div>
<svg class="ic" style="left:226px;top:341px" width="12" height="12" viewBox="0 0 20 20"><defs><clipPath id="cwoman347"><circle cx="10" cy="10" r="10"/></clipPath></defs><g clip-path="url(#cwoman347)"><rect width="20" height="20" fill="#3aa0c8"/><ellipse cx="10" cy="12" rx="7" ry="9" fill="#2a1a18"/><ellipse cx="10" cy="10.5" rx="3.8" ry="4.6" fill="#b07a5a"/><rect x="4" y="16" width="12" height="5" fill="#c0503a"/></g></svg>
<div class="a" style="left:241px;top:341.9px;font-size:10.64px;letter-spacing:0.202px;line-height:12px;color:#4f5565;font-weight:normal;-webkit-text-stroke:0.3px #4f5565;width:173px;overflow:hidden">Hola antonio_eddie22, Lamento ...</div>
<div class="a" style="left:369.176px;width:60px;text-align:right;top:341.9px;font-size:9.31px;letter-spacing:0.176px;line-height:12px;color:#4f5565;font-weight:normal;-webkit-text-stroke:0.3px #4f5565">2d</div>
<div class="a" style="left:226px;top:378px;width:18px;height:18px;border-radius:50%;background:#b9ee8f;color:#2a3a1a;font-size:7px;line-height:18px;text-align:center;letter-spacing:-0.2px;-webkit-text-stroke:0.3px #2a3a1a">AN</div>
<div class="a" style="left:250px;top:381.9px;font-size:10.73px;letter-spacing:0.203px;line-height:12px;color:#222;font-weight:normal;-webkit-text-stroke:0.3px #222;-webkit-text-stroke:0.3px #222">antonio_edd...</div>
<svg class="ic" style="left:328.846875px;top:382px" width="10" height="10" viewBox="0 0 10 10"><rect x="0.6" y="0.6" width="8.8" height="8.8" rx="2.4" fill="none" stroke="url(#igg)" stroke-width="1.1"/><circle cx="5" cy="5" r="2" fill="none" stroke="url(#igg)" stroke-width="1.1"/><circle cx="7.4" cy="2.6" r=".55" fill="#b03aa0"/></svg>
<div class="a" style="left:342.846875px;top:381.4px;font-size:9.5px;letter-spacing:0.18px;line-height:12px;color:#5b6170;font-weight:normal;-webkit-text-stroke:0.3px #5b6170;">Comment</div>
<svg class="ic" style="left:226px;top:401px" width="12" height="12" viewBox="0 0 20 20"><defs><clipPath id="cwoman407"><circle cx="10" cy="10" r="10"/></clipPath></defs><g clip-path="url(#cwoman407)"><rect width="20" height="20" fill="#3aa0c8"/><ellipse cx="10" cy="12" rx="7" ry="9" fill="#2a1a18"/><ellipse cx="10" cy="10.5" rx="3.8" ry="4.6" fill="#b07a5a"/><rect x="4" y="16" width="12" height="5" fill="#c0503a"/></g></svg>
<div class="a" style="left:241px;top:401.9px;font-size:10.64px;letter-spacing:0.202px;line-height:12px;color:#4f5565;font-weight:normal;-webkit-text-stroke:0.3px #4f5565;width:173px;overflow:hidden">Hey antonio_eddie22, I'm so sor...</div>
<div class="a" style="left:369.176px;width:60px;text-align:right;top:401.9px;font-size:9.31px;letter-spacing:0.176px;line-height:12px;color:#4f5565;font-weight:normal;-webkit-text-stroke:0.3px #4f5565">2d</div>
<div class="a" style="left:226px;top:438px;width:18px;height:18px;border-radius:50%;background:#b9ee8f;color:#2a3a1a;font-size:7px;line-height:18px;text-align:center;letter-spacing:-0.2px;-webkit-text-stroke:0.3px #2a3a1a">AN</div>
<div class="a" style="left:250px;top:441.9px;font-size:10.73px;letter-spacing:0.203px;line-height:12px;color:#222;font-weight:normal;-webkit-text-stroke:0.3px #222;-webkit-text-stroke:0.3px #222">antonio_edd...</div>
<svg class="ic" style="left:328.846875px;top:442px" width="10" height="10" viewBox="0 0 10 10"><rect x="0.6" y="0.6" width="8.8" height="8.8" rx="2.4" fill="none" stroke="url(#igg)" stroke-width="1.1"/><circle cx="5" cy="5" r="2" fill="none" stroke="url(#igg)" stroke-width="1.1"/><circle cx="7.4" cy="2.6" r=".55" fill="#b03aa0"/></svg>
<div class="a" style="left:342.846875px;top:441.4px;font-size:9.5px;letter-spacing:0.18px;line-height:12px;color:#5b6170;font-weight:normal;-webkit-text-stroke:0.3px #5b6170;">Comment</div>
<svg class="ic" style="left:226px;top:461px" width="12" height="12" viewBox="0 0 20 20"><defs><clipPath id="cman467"><circle cx="10" cy="10" r="10"/></clipPath></defs><g clip-path="url(#cman467)"><rect width="20" height="20" fill="#bbb"/><ellipse cx="10" cy="8" rx="5" ry="5.5" fill="#8a6a50"/><path d="M5 6Q10 1 15 6V4Q10 0 5 4Z" fill="#333"/><rect x="2" y="14" width="16" height="7" fill="#444"/></g></svg>
<div class="a" style="left:241px;top:461.9px;font-size:10.64px;letter-spacing:0.202px;line-height:12px;color:#4f5565;font-weight:normal;-webkit-text-stroke:0.3px #4f5565;width:173px;overflow:hidden">Hey antonio_eddie22, thank you ...</div>
<div class="a" style="left:369.176px;width:60px;text-align:right;top:461.9px;font-size:9.31px;letter-spacing:0.176px;line-height:12px;color:#4f5565;font-weight:normal;-webkit-text-stroke:0.3px #4f5565">2d</div>
<div class="a" style="left:226px;top:498px;width:18px;height:18px;border-radius:50%;background:#2fbf3a;color:#0a2a0a;font-size:7px;line-height:18px;text-align:center;letter-spacing:-0.2px;-webkit-text-stroke:0.3px #0a2a0a">FI</div>
<div class="a" style="left:250px;top:501.9px;font-size:10.73px;letter-spacing:0.203px;line-height:12px;color:#222;font-weight:normal;-webkit-text-stroke:0.3px #222;-webkit-text-stroke:0.3px #222">fitnessdep0t</div>
<svg class="ic" style="left:318.30625px;top:502px" width="10" height="10" viewBox="0 0 10 10"><rect x="0.6" y="0.6" width="8.8" height="8.8" rx="2.4" fill="none" stroke="url(#igg)" stroke-width="1.1"/><circle cx="5" cy="5" r="2" fill="none" stroke="url(#igg)" stroke-width="1.1"/><circle cx="7.4" cy="2.6" r=".55" fill="#b03aa0"/></svg>
<div class="a" style="left:332.30625px;top:501.4px;font-size:9.5px;letter-spacing:0.18px;line-height:12px;color:#5b6170;font-weight:normal;-webkit-text-stroke:0.3px #5b6170;">Comment</div>
<svg class="ic" style="left:226px;top:521px" width="12" height="12" viewBox="0 0 20 20"><defs><clipPath id="cman527"><circle cx="10" cy="10" r="10"/></clipPath></defs><g clip-path="url(#cman527)"><rect width="20" height="20" fill="#bbb"/><ellipse cx="10" cy="8" rx="5" ry="5.5" fill="#8a6a50"/><path d="M5 6Q10 1 15 6V4Q10 0 5 4Z" fill="#333"/><rect x="2" y="14" width="16" height="7" fill="#444"/></g></svg>
<div class="a" style="left:241px;top:521.9px;font-size:10.64px;letter-spacing:0.202px;line-height:12px;color:#4f5565;font-weight:normal;-webkit-text-stroke:0.3px #4f5565;width:173px;overflow:hidden">Hi fitnessdep0t, Yes, our entire ...</div>
<div class="a" style="left:369.176px;width:60px;text-align:right;top:521.9px;font-size:9.31px;letter-spacing:0.176px;line-height:12px;color:#4f5565;font-weight:normal;-webkit-text-stroke:0.3px #4f5565">6d</div>
<div class="a" style="left:226px;top:558px;width:18px;height:18px;border-radius:50%;background:#b9ee8f;color:#2a3a1a;font-size:7px;line-height:18px;text-align:center;letter-spacing:-0.2px;-webkit-text-stroke:0.3px #2a3a1a">AN</div>
<div class="a" style="left:250px;top:561.9px;font-size:10.73px;letter-spacing:0.203px;line-height:12px;color:#222;font-weight:normal;-webkit-text-stroke:0.3px #222;-webkit-text-stroke:0.3px #222">antonio_edd...</div>
<svg class="ic" style="left:328.846875px;top:562px" width="10" height="10" viewBox="0 0 10 10"><rect x="0.6" y="0.6" width="8.8" height="8.8" rx="2.4" fill="none" stroke="url(#igg)" stroke-width="1.1"/><circle cx="5" cy="5" r="2" fill="none" stroke="url(#igg)" stroke-width="1.1"/><circle cx="7.4" cy="2.6" r=".55" fill="#b03aa0"/></svg>
<div class="a" style="left:342.846875px;top:561.4px;font-size:9.5px;letter-spacing:0.18px;line-height:12px;color:#5b6170;font-weight:normal;-webkit-text-stroke:0.3px #5b6170;">Comment</div>
<svg class="ic" style="left:226px;top:581px" width="12" height="12" viewBox="0 0 20 20"><defs><clipPath id="cwoman587"><circle cx="10" cy="10" r="10"/></clipPath></defs><g clip-path="url(#cwoman587)"><rect width="20" height="20" fill="#3aa0c8"/><ellipse cx="10" cy="12" rx="7" ry="9" fill="#2a1a18"/><ellipse cx="10" cy="10.5" rx="3.8" ry="4.6" fill="#b07a5a"/><rect x="4" y="16" width="12" height="5" fill="#c0503a"/></g></svg>
<div class="a" style="left:241px;top:581.9px;font-size:10.64px;letter-spacing:0.202px;line-height:12px;color:#4f5565;font-weight:normal;-webkit-text-stroke:0.3px #4f5565;width:173px;overflow:hidden">Hey antonio_eddie22, Our produ...</div>
<div class="a" style="left:369.176px;width:60px;text-align:right;top:581.9px;font-size:9.31px;letter-spacing:0.176px;line-height:12px;color:#4f5565;font-weight:normal;-webkit-text-stroke:0.3px #4f5565">6d</div>
<div class="a" style="left:226px;top:618px;width:18px;height:18px;border-radius:50%;background:#a8402a;color:#f0d0c0;font-size:7px;line-height:18px;text-align:center;letter-spacing:-0.2px;-webkit-text-stroke:0.3px #f0d0c0">FR</div>
<div class="a" style="left:250px;top:621.9px;font-size:10.73px;letter-spacing:0.203px;line-height:12px;color:#222;font-weight:normal;-webkit-text-stroke:0.3px #222;-webkit-text-stroke:0.3px #222">Free...</div>
<svg class="ic" style="left:290.43125px;top:622px" width="10" height="10" viewBox="0 0 10 10"><circle cx="5" cy="5" r="4.6" fill="#3a3a3a"/><path d="M5.5 1.5Q7 2.5 6.8 4Q6 5 7.5 6Q8.5 6.5 8.9 5.2Q9 2.5 7 1.2Z" fill="#fff"/><path d="M1.5 4Q2.5 5.5 3.5 5.3Q4.5 6.5 3.8 8.5Q2 7.5 1.4 5.5Z" fill="#fff"/></svg>
<div class="a" style="left:304.43125px;top:621.4px;font-size:9.5px;letter-spacing:0.18px;line-height:12px;color:#5b6170;font-weight:normal;-webkit-text-stroke:0.3px #5b6170;">Competitor: Listening</div>
<div class="a" style="left:226px;top:641.9px;font-size:10.64px;letter-spacing:0.202px;line-height:12px;color:#4f5565;font-weight:normal;-webkit-text-stroke:0.3px #4f5565;width:188px;overflow:hidden">Publer <span style="letter-spacing:0.3px;font-size:9.6px;-webkit-text-stroke:0">是一個社群媒體管理服務，類似</span>...</div>
<div class="a" style="left:369.176px;width:60px;text-align:right;top:641.9px;font-size:9.31px;letter-spacing:0.176px;line-height:12px;color:#4f5565;font-weight:normal;-webkit-text-stroke:0.3px #4f5565">6d</div>
<div class="a" style="left:226px;top:678px;width:18px;height:18px;border-radius:50%;background:#b9ee8f;color:#2a3a1a;font-size:7px;line-height:18px;text-align:center;letter-spacing:-0.2px;-webkit-text-stroke:0.3px #2a3a1a">AN</div>
<div class="a" style="left:250px;top:681.9px;font-size:10.73px;letter-spacing:0.203px;line-height:12px;color:#222;font-weight:normal;-webkit-text-stroke:0.3px #222;-webkit-text-stroke:0.3px #222">antonio_edd...</div>
<svg class="ic" style="left:328.846875px;top:682px" width="10" height="10" viewBox="0 0 10 10"><rect x="0.6" y="0.6" width="8.8" height="8.8" rx="2.4" fill="none" stroke="url(#igg)" stroke-width="1.1"/><circle cx="5" cy="5" r="2" fill="none" stroke="url(#igg)" stroke-width="1.1"/><circle cx="7.4" cy="2.6" r=".55" fill="#b03aa0"/></svg>
<div class="a" style="left:342.846875px;top:681.4px;font-size:9.5px;letter-spacing:0.18px;line-height:12px;color:#5b6170;font-weight:normal;-webkit-text-stroke:0.3px #5b6170;">Comment</div>
<svg class="ic" style="left:226px;top:701px" width="12" height="12" viewBox="0 0 20 20"><defs><clipPath id="cwoman707"><circle cx="10" cy="10" r="10"/></clipPath></defs><g clip-path="url(#cwoman707)"><rect width="20" height="20" fill="#3aa0c8"/><ellipse cx="10" cy="12" rx="7" ry="9" fill="#2a1a18"/><ellipse cx="10" cy="10.5" rx="3.8" ry="4.6" fill="#b07a5a"/><rect x="4" y="16" width="12" height="5" fill="#c0503a"/></g></svg>
<div class="a" style="left:241px;top:701.9px;font-size:10.64px;letter-spacing:0.202px;line-height:12px;color:#4f5565;font-weight:normal;-webkit-text-stroke:0.3px #4f5565;width:173px;overflow:hidden">Hey antonio_eddie22, Our produ...</div>
<div class="a" style="left:369.176px;width:60px;text-align:right;top:701.9px;font-size:9.31px;letter-spacing:0.176px;line-height:12px;color:#4f5565;font-weight:normal;-webkit-text-stroke:0.3px #4f5565">1w</div><div class="a" style="left:451px;top:12.9px;font-size:10.45px;letter-spacing:0.198px;line-height:12px;color:#222;font-weight:normal;-webkit-text-stroke:0.3px #222;-webkit-text-stroke:0.35px currentColor;">antonio_eddie22</div>
<svg class="ic" style="left:856px;top:16px" width="12" height="3" viewBox="0 0 12 3"><circle cx="1.5" cy="1.5" r="1.25" fill="#333"/><circle cx="6" cy="1.5" r="1.25" fill="#333"/><circle cx="10.5" cy="1.5" r="1.25" fill="#333"/></svg>
<svg class="ic" style="left:880px;top:11px" width="12" height="12" viewBox="0 0 12 12"><circle cx="6" cy="6.6" r="4.3" fill="none" stroke="#333" stroke-width="1.1"/><path d="M6 4.3V6.8L7.5 7.8" fill="none" stroke="#333" stroke-width="1"/><path d="M1 2.6L2.8 1M11 2.6L9.2 1" stroke="#333" stroke-width="1.1"/></svg>
<svg class="ic" style="left:908px;top:13px" width="9" height="9" viewBox="0 0 9 9"><path d="M3.5 1.5Q3.9 4 6 4.5Q3.9 5 3.5 7.5Q3.1 5 1 4.5Q3.1 4 3.5 1.5Z" fill="#333"/><circle cx="7.5" cy="1.5" r=".8" fill="#333"/><circle cx="7.5" cy="7.5" r=".8" fill="#333"/></svg>
<div class="a" style="left:920px;top:12.9px;font-size:9.5px;letter-spacing:0.18px;line-height:12px;color:#333;font-weight:normal;-webkit-text-stroke:0.3px #333;">Summarize</div>
<div class="a" style="left:981px;top:9px;width:53px;height:18px;background:#2b55aa;border-radius:3px"></div>
<svg class="ic" style="left:988px;top:15px" width="8" height="6" viewBox="0 0 8 6"><path d="M0.7 3L3 5.2L7.3 0.8" fill="none" stroke="#e8eefa" stroke-width=".9"/></svg>
<div class="a" style="left:1003px;top:12.9px;font-size:9.31px;letter-spacing:0.176px;line-height:12px;color:#fff;font-weight:normal;-webkit-text-stroke:0.3px #fff;">Close</div>
<div class="a" style="left:455px;top:36px;width:576px;height:682px;border:1px solid #d6d6e0;border-radius:3px;background:#fff"></div>
<svg class="ic" style="left:467px;top:54px" width="18" height="18" viewBox="0 0 18 18"><circle cx="9" cy="9" r="8.8" fill="#111"/><rect x="5.2" y="4.6" width="7" height="1.6" rx=".5" fill="#eee"/><rect x="5.2" y="11.8" width="7" height="1.6" rx=".5" fill="#eee"/><rect x="6.2" y="6.2" width="5" height="5.6" fill="#bbb"/><path d="M6.2 7H11.2M6.2 8.4H11.2M6.2 9.8H11.2" stroke="#eee" stroke-width=".6"/><path d="M10 6.5L13 4.5" stroke="#ddd" stroke-width=".7"/></svg>
<div class="a" style="left:491px;top:50.9px;font-size:10.45px;letter-spacing:0.198px;line-height:12px;color:#222;font-weight:normal;-webkit-text-stroke:0.3px #222;-webkit-text-stroke:0.35px currentColor;">Pins_N_Threads</div>
<svg class="ic" style="left:492px;top:66px" width="10" height="10" viewBox="0 0 10 10"><rect x="0.6" y="0.6" width="8.8" height="8.8" rx="2.4" fill="none" stroke="url(#igg)" stroke-width="1.1"/><circle cx="5" cy="5" r="2" fill="none" stroke="url(#igg)" stroke-width="1.1"/><circle cx="7.4" cy="2.6" r=".55" fill="#b03aa0"/></svg>
<div class="a" style="left:506px;top:65.9px;font-size:9.5px;letter-spacing:0.18px;line-height:12px;color:#5b6170;font-weight:normal;-webkit-text-stroke:0.3px #5b6170;">Post</div>
<div class="a" style="left:532px;top:71px;width:2px;height:2px;background:#5b6170;border-radius:1px"></div>
<div class="a" style="left:543px;top:65.9px;font-size:9.5px;letter-spacing:0.18px;line-height:12px;color:#5b6170;font-weight:normal;-webkit-text-stroke:0.3px #5b6170;">3w</div>
<div class="a" style="left:467px;top:85.9px;font-size:10.92px;letter-spacing:0.207px;line-height:14px;color:#222;font-weight:normal;-webkit-text-stroke:0.3px #222;">Little bag, big statement. Paired it with my go-to denim and a touch of pearl elegance — because details</div>
<div class="a" style="left:467px;top:100.9px;font-size:10.92px;letter-spacing:0.207px;line-height:14px;color:#222;font-weight:normal;-webkit-text-stroke:0.3px #222;">always define the vibe.</div>
<svg class="ic" style="left:586px;top:102px" width="9" height="10" viewBox="0 0 9 10"><path d="M5 2Q5.3 5.5 8.5 6Q5.3 6.5 5 10Q4.7 6.5 1.5 6Q4.7 5.5 5 2Z" fill="#e8d870"/><path d="M2 0.5Q2.2 2 3.5 2.2Q2.2 2.4 2 4Q1.8 2.4 0.5 2.2Q1.8 2 2 0.5Z" fill="#e8d870"/></svg>
<svg class="ic" style="left:597px;top:101px" width="8" height="10" viewBox="0 0 8 10"><path d="M1 0.5H7V9.5H5L4 3L3 9.5H1Z" fill="#2a4a9a"/></svg>
<svg class="ic" style="left:605px;top:101px" width="11" height="10" viewBox="0 0 11 10"><path d="M3 4Q3 0.8 5.5 0.8Q8 0.8 8 4" fill="none" stroke="#8a2a1a" stroke-width="1"/><path d="M1 4H10L9.5 9.5H1.5Z" fill="#c0392b"/></svg>
<svg class="ic" style="left:653px;top:121px" width="179" height="179" viewBox="0 0 179 179">
<defs><clipPath id="ph"><rect width="179" height="179" rx="3"/></clipPath>
<clipPath id="bagc"><path d="M45.6 124Q46 101 86 98Q127 100 128.6 122L127 140Q125 152 121 155.5L54 155Q49 150 47.5 140Z"/></clipPath></defs>
<g clip-path="url(#ph)">
<rect width="179" height="179" fill="#f4efe9"/>
<rect y="125" width="179" height="54" fill="#f5f1ec"/>
<path d="M0 37L2 38L40.4 107L40.4 110L0 133Z" fill="#e8b9b6"/>
<path d="M0 133L10 128L6 160L0 162Z" fill="#eed0cc"/>
<path d="M2 38.5L40.4 108" stroke="#d8c060" stroke-width="1.1"/>
<circle cx="33" cy="29" r="11.5" fill="none" stroke="#e8d0a0" stroke-width="2.2" stroke-dasharray="1.6 1.2"/>
<path d="M36 22L53 13" stroke="#e8c8c0" stroke-width="4" opacity=".8"/>
<path d="M40 21L48 17" stroke="#6a5040" stroke-width="1"/>
<path d="M85 0H179V110L130 118L124.8 104L112 73.7L99 30Z" fill="#a6c1da"/>
<path d="M92 0H179V28L150 22Q120 15 100 20Z" fill="#9ab7d2"/>
<path d="M140 0Q150 20 179 40V0Z" fill="#b4cadf"/>
<path d="M118 22Q135 36 152 30" fill="none" stroke="#c6d7e8" stroke-width="1.5"/>
<path d="M105 35L126 108" stroke="#8eaac6" stroke-width="1.2"/>
<path d="M150 55L179 62V105L158 108Z" fill="#b8cde2" opacity=".8"/>
<path d="M128 60L150 100" stroke="#bcd0e4" stroke-width="3" opacity=".7"/>
<circle cx="122" cy="15" r="1.5" fill="#d8a040"/><circle cx="145" cy="11" r="1.5" fill="#d8a040"/><circle cx="118" cy="33" r="1.2" fill="#d07050"/>
<path d="M48 110Q47 75 48 56Q52 38 60 29Q68 20 80 17Q92 15 104 20Q125 21 140 22Q160 30 179 48" fill="none" stroke="#3a2418" stroke-width="1.8"/>
<path d="M62 24Q75 15 100 17" fill="none" stroke="#3a2418" stroke-width="1.5"/>
<path d="M127 114Q115 100 104 91.6Q88 80 83 66Q79 52 82 38Q86 28 99 26.4Q112 25 121 29Q135 36 150 52Q163 68 179 85" fill="none" stroke="#3a2418" stroke-width="1.6"/>
<path d="M101 18L106 22" stroke="#e0c040" stroke-width="1.6"/>
<path d="M45.6 124Q46 101 86 98Q127 100 128.6 122L127 140Q125 152 121 155.5L54 155Q49 150 47.5 140Z" fill="#7e573a"/>
<g clip-path="url(#bagc)" fill="#4e2f1e"><rect x="44.0" y="97.0" width="7.2" height="7.2"/><rect x="58.4" y="97.0" width="7.2" height="7.2"/><rect x="72.8" y="97.0" width="7.2" height="7.2"/><rect x="87.2" y="97.0" width="7.2" height="7.2"/><rect x="101.6" y="97.0" width="7.2" height="7.2"/><rect x="116.0" y="97.0" width="7.2" height="7.2"/><rect x="51.2" y="104.2" width="7.2" height="7.2"/><rect x="65.6" y="104.2" width="7.2" height="7.2"/><rect x="80.0" y="104.2" width="7.2" height="7.2"/><rect x="94.4" y="104.2" width="7.2" height="7.2"/><rect x="108.8" y="104.2" width="7.2" height="7.2"/><rect x="123.2" y="104.2" width="7.2" height="7.2"/><rect x="44.0" y="111.4" width="7.2" height="7.2"/><rect x="58.4" y="111.4" width="7.2" height="7.2"/><rect x="72.8" y="111.4" width="7.2" height="7.2"/><rect x="87.2" y="111.4" width="7.2" height="7.2"/><rect x="101.6" y="111.4" width="7.2" height="7.2"/><rect x="116.0" y="111.4" width="7.2" height="7.2"/><rect x="51.2" y="118.6" width="7.2" height="7.2"/><rect x="65.6" y="118.6" width="7.2" height="7.2"/><rect x="80.0" y="118.6" width="7.2" height="7.2"/><rect x="94.4" y="118.6" width="7.2" height="7.2"/><rect x="108.8" y="118.6" width="7.2" height="7.2"/><rect x="123.2" y="118.6" width="7.2" height="7.2"/><rect x="44.0" y="125.8" width="7.2" height="7.2"/><rect x="58.4" y="125.8" width="7.2" height="7.2"/><rect x="72.8" y="125.8" width="7.2" height="7.2"/><rect x="87.2" y="125.8" width="7.2" height="7.2"/><rect x="101.6" y="125.8" width="7.2" height="7.2"/><rect x="116.0" y="125.8" width="7.2" height="7.2"/><rect x="51.2" y="133.0" width="7.2" height="7.2"/><rect x="65.6" y="133.0" width="7.2" height="7.2"/><rect x="80.0" y="133.0" width="7.2" height="7.2"/><rect x="94.4" y="133.0" width="7.2" height="7.2"/><rect x="108.8" y="133.0" width="7.2" height="7.2"/><rect x="123.2" y="133.0" width="7.2" height="7.2"/><rect x="44.0" y="140.2" width="7.2" height="7.2"/><rect x="58.4" y="140.2" width="7.2" height="7.2"/><rect x="72.8" y="140.2" width="7.2" height="7.2"/><rect x="87.2" y="140.2" width="7.2" height="7.2"/><rect x="101.6" y="140.2" width="7.2" height="7.2"/><rect x="116.0" y="140.2" width="7.2" height="7.2"/><rect x="51.2" y="147.4" width="7.2" height="7.2"/><rect x="65.6" y="147.4" width="7.2" height="7.2"/><rect x="80.0" y="147.4" width="7.2" height="7.2"/><rect x="94.4" y="147.4" width="7.2" height="7.2"/><rect x="108.8" y="147.4" width="7.2" height="7.2"/><rect x="123.2" y="147.4" width="7.2" height="7.2"/><rect x="44.0" y="154.6" width="7.2" height="7.2"/><rect x="58.4" y="154.6" width="7.2" height="7.2"/><rect x="72.8" y="154.6" width="7.2" height="7.2"/><rect x="87.2" y="154.6" width="7.2" height="7.2"/><rect x="101.6" y="154.6" width="7.2" height="7.2"/><rect x="116.0" y="154.6" width="7.2" height="7.2"/></g>
<path d="M46.5 117Q87 112 128 117" fill="none" stroke="#33200f" stroke-width="2.6"/>
<path d="M45.6 124Q46 101 86 98Q127 100 128.6 122L127 140Q125 152 121 155.5L54 155Q49 150 47.5 140Z" fill="none" stroke="#2e1b10" stroke-width=".9"/>
<circle cx="46.5" cy="114" r="1" fill="#d8b040"/><circle cx="128" cy="120" r="1" fill="#d8b040"/>
<ellipse cx="88" cy="158" rx="36" ry="2.5" fill="#e6ddd2" opacity=".6"/>
</g></svg>
<svg class="ic" style="left:940px;top:314px" width="12" height="3" viewBox="0 0 12 3"><circle cx="1.5" cy="1.5" r="1.15" fill="#222"/><circle cx="6" cy="1.5" r="1.15" fill="#222"/><circle cx="10.5" cy="1.5" r="1.15" fill="#222"/></svg>
<svg class="ic" style="left:961px;top:310px" width="11" height="11" viewBox="0 0 11 11"><text x="0.3" y="4.6" font-size="4.8" fill="#222" font-family="Liberation Sans" font-weight="bold">a</text><text x="5.2" y="10.6" font-size="6.4" fill="#222" font-family="Liberation Sans" font-weight="bold">A</text><path d="M5.8 1H7.8Q9.8 1 9.8 3V4.5" fill="none" stroke="#222" stroke-width="1.1"/><path d="M1.2 6.2V7.8Q1.2 9.9 3.2 9.9H4.4" fill="none" stroke="#222" stroke-width="1.1"/></svg>
<svg class="ic" style="left:982px;top:310px" width="11" height="11" viewBox="0 0 11 11"><path d="M1.3 6.2L6 1.5Q6.4 1.1 7 1.1H9.2Q9.9 1.1 9.9 1.8V4Q9.9 4.6 9.5 5L4.8 9.7Q4.2 10.3 3.6 9.7L1.3 7.4Q0.7 6.8 1.3 6.2Z" fill="none" stroke="#222" stroke-width="1.1"/><circle cx="7.6" cy="3.4" r=".7" fill="#222"/></svg>
<svg class="ic" style="left:1003px;top:310px" width="11" height="11" viewBox="0 0 11 11"><path d="M1.5 6.5V4Q1.5 2.2 3.3 2.2H8.5" fill="none" stroke="#222" stroke-width="1.2"/><path d="M7.3 0.6L9.3 2.2L7.3 3.8Z" fill="#222"/><path d="M9.5 4.5V7Q9.5 8.8 7.7 8.8H2.5" fill="none" stroke="#222" stroke-width="1.2"/><path d="M3.7 7.2L1.7 8.8L3.7 10.4Z" fill="#222"/><circle cx="5.5" cy="5.5" r="1.3" fill="none" stroke="#222" stroke-width="1"/></svg>
<div class="a" style="left:456px;top:330px;width:574px;height:1px;background:#dcdce4"></div>
<div class="a" style="left:473px;top:344.9px;font-size:10.45px;letter-spacing:0.198px;line-height:12px;color:#222;font-weight:normal;-webkit-text-stroke:0.3px #222;">antonio_eddie22</div>
<div class="a" style="left:569px;top:344.9px;font-size:10.45px;letter-spacing:0.198px;line-height:12px;color:#9a9aa5;font-weight:normal;-webkit-text-stroke:0.3px #9a9aa5;">All</div>
<div class="a" style="left:473px;top:362px;width:544px;height:1px;background:#e0e0e6"></div>
<div class="a" style="left:473px;top:360px;width:84px;height:2px;background:#222"></div>
<div class="a" style="left:492px;top:383px;width:445px;height:95px;background:linear-gradient(90deg,#f6f6f9 0%,#f6f6f9 55%,rgba(246,246,249,0) 100%)"></div>
<svg class="ic" style="left:499px;top:392px" width="9" height="9" viewBox="0 0 9 9"><path d="M1 8L1.5 6L6.5 1L8 2.5L3 7.5Z" fill="#555"/></svg>
<div class="a" style="left:512px;top:391.9px;font-size:10.45px;letter-spacing:0.198px;line-height:12px;color:#555;font-weight:normal;-webkit-text-stroke:0.3px #555;-webkit-text-stroke:0.1px #555">Author</div>
<div class="a" style="left:497px;top:411px;font-size:11px;line-height:14px;color:#8a8a94;-webkit-text-stroke:0.15px #8a8a94">Earn money from home <svg style="display:inline-block;vertical-align:-1px" width="11" height="10" viewBox="0 0 11 10"><path d="M1 6L5 1L9 4L5 9Z" fill="#d8c898"/><path d="M3 8L7 3L9.5 5L5.5 9.7Z" fill="#e6d8b0"/><circle cx="6" cy="5" r="1" fill="#c8b060"/></svg> No experience needed! Click here <svg style="display:inline-block;vertical-align:-1px" width="12" height="9" viewBox="0 0 12 9"><path d="M1 3H7L10 4.5L7 6H3Q1 6 1 4.5Z" fill="#d6e4a0"/><path d="M4 6V8.5H7V6" fill="#e0e8b8"/></svg></div>
<div class="a" style="left:497px;top:427.9px;font-size:10.45px;letter-spacing:0.198px;line-height:12px;color:#8a8a94;font-weight:normal;-webkit-text-stroke:0.3px #8a8a94;">bit.ly/easycash</div>
<div class="a" style="left:497px;top:448px;width:77px;height:23px;border:1px solid #e4e4ea;border-radius:12px;background:#f8f8fb"></div>
<div class="a" style="left:505px;top:452px;width:13px;height:13px;background:#e06666;border-radius:2px"></div>
<div class="a" style="left:524px;top:453.9px;font-size:10.45px;letter-spacing:0.198px;line-height:12px;color:#888;font-weight:normal;-webkit-text-stroke:0.3px #888;">Spam</div>
<svg class="ic" style="left:559px;top:454px" width="9" height="9" viewBox="0 0 9 9"><path d="M1 1L8 8M8 1L1 8" stroke="#777" stroke-width="1.1"/></svg>
<div class="a" style="left:468px;top:457px;width:16px;height:16px;border-radius:50%;background:#d4f0b8;color:#6a7a5a;font-size:6.5px;line-height:16px;text-align:center;letter-spacing:-0.2px;-webkit-text-stroke:0.3px #6a7a5a">AN</div>
<svg class="ic" style="left:477px;top:467px" width="8" height="8" viewBox="0 0 8 8"><path d="M1 4L4 1H7V4L4 7Z" fill="#5aa0e0"/></svg>
<svg class="ic" style="left:497px;top:485px" width="10" height="10" viewBox="0 0 10 10"><rect x="0.6" y="0.6" width="8.8" height="8.8" rx="2.4" fill="none" stroke="#e6a6bc" stroke-width="1.1"/><circle cx="5" cy="5" r="2" fill="none" stroke="#e6a6bc" stroke-width="1.1"/><circle cx="7.4" cy="2.6" r=".55" fill="#e6a6bc"/></svg>
<div class="a" style="left:511px;top:484.9px;font-size:9.5px;letter-spacing:0.18px;line-height:12px;color:#a5a5b0;font-weight:normal;-webkit-text-stroke:0.3px #a5a5b0;">Comment</div>
<div class="a" style="left:559px;top:489px;width:2px;height:2px;background:#a5a5b0;border-radius:1px"></div>
<div class="a" style="left:565px;top:484.9px;font-size:9.5px;letter-spacing:0.18px;line-height:12px;color:#a5a5b0;font-weight:normal;-webkit-text-stroke:0.3px #a5a5b0;">3h</div>
<div class="a" style="left:582px;top:489px;width:2px;height:2px;background:#a5a5b0;border-radius:1px"></div>
<svg class="ic" style="left:588px;top:485px" width="11" height="10" viewBox="0 0 11 10"><path d="M1 5Q5.5 0 10 5Q5.5 10 1 5Z" fill="none" stroke="#7ab0e0" stroke-width="1"/><circle cx="5.5" cy="5" r="1.5" fill="none" stroke="#7ab0e0" stroke-width="1"/><path d="M1.5 1L9.5 9" stroke="#7ab0e0" stroke-width="1"/></svg>
<div class="a" style="left:603px;top:484.9px;font-size:9.5px;letter-spacing:0.18px;line-height:12px;color:#6aa2d8;font-weight:normal;-webkit-text-stroke:0.3px #6aa2d8;">Hidden</div>
<div class="a" style="left:640px;top:489px;width:2px;height:2px;background:#a5a5b0;border-radius:1px"></div>
<svg class="ic" style="left:647px;top:484px" width="11" height="11" viewBox="0 0 11 11"><circle cx="5.5" cy="5.5" r="4.8" fill="none" stroke="#555" stroke-width="1"/><circle cx="3.8" cy="4.5" r=".7" fill="#555"/><circle cx="7.2" cy="4.5" r=".7" fill="#555"/><path d="M3.5 7.3H7.5" stroke="#555" stroke-width="1"/></svg>
<div class="a" style="left:467px;top:589px;width:551px;height:128px;border:1px solid #d6d6e0;border-radius:3px;background:#fff;overflow:hidden"></div>
<div class="a" style="left:468px;top:590px;width:549px;height:18px;background:#cfe0fb"></div>
<div class="a" style="left:474px;top:593.4px;font-size:9.88px;letter-spacing:0.187px;line-height:12px;color:#333;font-weight:normal;-webkit-text-stroke:0.3px #333;-webkit-text-stroke:0.35px currentColor;">Select users to mention</div>
<svg class="ic" style="left:473px;top:616px" width="16" height="16" viewBox="0 0 16 16"><circle cx="8" cy="8" r="7.6" fill="#111"/><rect x="4.6" y="4" width="6.2" height="1.5" rx=".5" fill="#eee"/><rect x="4.6" y="10.5" width="6.2" height="1.5" rx=".5" fill="#eee"/><rect x="5.5" y="5.5" width="4.4" height="5" fill="#bbb"/><path d="M5.5 6.3H9.9M5.5 7.6H9.9M5.5 8.9H9.9" stroke="#eee" stroke-width=".5"/></svg>
<svg class="ic" style="left:496px;top:618px" width="12" height="12" viewBox="0 0 10 10"><rect x="0.6" y="0.6" width="8.8" height="8.8" rx="2.4" fill="none" stroke="url(#igg)" stroke-width="1.1"/><circle cx="5" cy="5" r="2" fill="none" stroke="url(#igg)" stroke-width="1.1"/><circle cx="7.4" cy="2.6" r=".55" fill="#b03aa0"/></svg>
<div class="a" style="left:516px;top:618.9px;font-size:10.45px;letter-spacing:0.198px;line-height:12px;color:#222;font-weight:normal;-webkit-text-stroke:0.3px #222;">Pins_N_Threads</div>
<svg class="ic" style="left:937px;top:617px" width="12" height="13" viewBox="0 0 12 13"><rect x="1" y="2" width="10" height="10.5" rx="1.5" fill="none" stroke="#333" stroke-width="1.1"/><rect x="3.5" y="0.8" width="5" height="2.4" rx=".6" fill="#fff" stroke="#333" stroke-width="1"/><path d="M3.5 6H8.5M3.5 8.2H8.5M3.5 10.3H6.5" stroke="#333" stroke-width="1"/></svg>
<div class="a" style="left:955px;top:618.9px;font-size:10.45px;letter-spacing:0.198px;line-height:12px;color:#222;font-weight:normal;-webkit-text-stroke:0.3px #222;">Add note</div>
<div class="a" style="left:468px;top:641px;width:549px;height:1px;background:#e4e4ea"></div>
<div class="a" style="left:475px;top:650.9px;font-size:10.45px;letter-spacing:0.198px;line-height:12px;color:#888;font-weight:normal;-webkit-text-stroke:0.3px #888;">Enter your reply</div>
<svg class="ic" style="left:476px;top:691px" width="12" height="12" viewBox="0 0 12 12"><path d="M9.6 3.2A4.9 4.9 0 1 0 10.8 6.5" fill="none" stroke="#222" stroke-width="1.1"/><circle cx="4.3" cy="5.2" r=".7" fill="#222"/><circle cx="7.5" cy="5.2" r=".7" fill="#222"/><path d="M3.4 7.2H8.4Q7.8 9.2 5.9 9.2Q4 9.2 3.4 7.2Z" fill="#222"/><path d="M10 0.6L10.6 1.8L11.8 2.4L10.6 3L10 4.2L9.4 3L8.2 2.4L9.4 1.8Z" fill="#222"/></svg>
<svg class="ic" style="left:498px;top:691px" width="12" height="12" viewBox="0 0 12 12"><path d="M1 4.5L5 1.2L9 4.5V9.5H1Z" fill="none" stroke="#222" stroke-width="1.1" stroke-linejoin="round"/><path d="M1 4.5L5 7L9 4.5" fill="none" stroke="#222" stroke-width="1"/><path d="M7.8 7.6L11 10.8" stroke="#222" stroke-width="1.4" stroke-linecap="round"/></svg>
<svg class="ic" style="left:519px;top:691px" width="11" height="11" viewBox="0 0 11 11"><path d="M4 2Q4.4 5 7 5.5Q4.4 6 4 9Q3.6 6 1 5.5Q3.6 5 4 2Z" fill="#666"/><circle cx="8.5" cy="2.5" r=".8" fill="#666"/><circle cx="8.5" cy="8.5" r=".8" fill="#666"/></svg>
<div class="a" style="left:826px;top:691.9px;font-size:9.5px;letter-spacing:0.18px;line-height:12px;color:#444;font-weight:normal;-webkit-text-stroke:0.3px #444;">1000</div>
<div class="a" style="left:861px;top:684px;width:92px;height:27px;border:1px solid #dcdce4;border-radius:3px;background:#fff"></div>
<div class="a" style="left:872px;top:691.9px;font-size:10.07px;letter-spacing:0.191px;line-height:12px;color:#9a9aa5;font-weight:normal;-webkit-text-stroke:0.3px #9a9aa5;">Reply &amp; Close</div>
<div class="a" style="left:960px;top:684px;width:51px;height:27px;background:#dcdce2;border-radius:3px"></div>
<div class="a" style="left:971px;top:691.9px;font-size:10.07px;letter-spacing:0.191px;line-height:12px;color:#9a9aa5;font-weight:normal;-webkit-text-stroke:0.3px #9a9aa5;">Reply</div>
<svg class="ic" style="left:506px;top:197px;filter:drop-shadow(0 1px 1.2px rgba(0,0,0,.35))" width="20" height="28" viewBox="0 0 20 28"><path d="M3 3L3 21.5L7.5 17.6L10.6 25L13.6 23.7L10.6 16.6L16.6 16.6Z" fill="#0a0a0a" stroke="#fff" stroke-width="1.3" stroke-linejoin="round"/></svg><svg class="ic" style="left:1050px;top:13px" width="11" height="9" viewBox="0 0 11 9"><path d="M0.5 4.5H7.5M4.5 1.5L7.5 4.5L4.5 7.5M9.8 0.5V8.5" fill="none" stroke="#222" stroke-width="1.2"/></svg>
<div class="a" style="left:1071px;top:12.9px;font-size:10.45px;letter-spacing:0.198px;line-height:12px;color:#222;font-weight:normal;-webkit-text-stroke:0.3px #222;">Details</div>
<div class="a" style="left:1050px;top:44.9px;font-size:9.5px;letter-spacing:0.18px;line-height:12px;color:#333;font-weight:normal;-webkit-text-stroke:0.3px #333;-webkit-text-stroke:0.25px currentColor;">State</div>
<div class="a" style="left:1141px;top:40px;width:51px;height:19px;border:1px solid #5a9ad8;border-radius:10px;background:#e4effb"></div>
<svg class="ic" style="left:1147px;top:44px" width="11" height="10" viewBox="0 0 11 10"><path d="M1 4.5L5.5 1L10 4.5V9.5H1Z" fill="none" stroke="#3a86cf" stroke-width="1"/><path d="M1 4.5L5.5 7L10 4.5" fill="none" stroke="#3a86cf" stroke-width="1"/></svg>
<div class="a" style="left:1161px;top:44.9px;font-size:9.5px;letter-spacing:0.18px;line-height:12px;color:#3a86cf;font-weight:normal;-webkit-text-stroke:0.3px #3a86cf;">Open</div>
<div class="a" style="left:1050px;top:78.9px;font-size:9.5px;letter-spacing:0.18px;line-height:12px;color:#333;font-weight:normal;-webkit-text-stroke:0.3px #333;-webkit-text-stroke:0.25px currentColor;">Assign conversa...</div>
<div class="a" style="left:1141px;top:69px;width:129px;height:29px;border:1px solid #d8d8e0;border-radius:3px;background:#fff"></div>
<svg class="ic" style="left:1254px;top:81px" width="8" height="4" viewBox="0 0 8 4"><path d="M0 0H8L4 4Z" fill="#666"/></svg>
<div class="a" style="left:1168px;top:78.4px;font-size:10.45px;letter-spacing:0.198px;line-height:12px;color:#222;font-weight:normal;-webkit-text-stroke:0.3px #222;">Isabell Newm...</div>
<svg class="ic" style="left:1147px;top:75px" width="16" height="16" viewBox="0 0 20 20"><defs><clipPath id="isb"><circle cx="10" cy="10" r="10"/></clipPath></defs><g clip-path="url(#isb)"><rect width="20" height="20" fill="#3aa0c8"/><ellipse cx="10" cy="12" rx="7" ry="9" fill="#2a1a18"/><ellipse cx="10" cy="10.5" rx="3.8" ry="4.6" fill="#b07a5a"/><rect x="4" y="16" width="12" height="5" fill="#c0503a"/></g></svg>
<div class="a" style="left:1050px;top:115.9px;font-size:9.5px;letter-spacing:0.18px;line-height:12px;color:#333;font-weight:normal;-webkit-text-stroke:0.3px #333;-webkit-text-stroke:0.25px currentColor;">Sentiment</div>
<div class="a" style="left:1141px;top:107px;width:129px;height:29px;border:1px solid #d8d8e0;border-radius:3px;background:#fff"></div>
<svg class="ic" style="left:1254px;top:119px" width="8" height="4" viewBox="0 0 8 4"><path d="M0 0H8L4 4Z" fill="#666"/></svg>
<div class="a" style="left:1168px;top:116.4px;font-size:10.45px;letter-spacing:0.198px;line-height:12px;color:#222;font-weight:normal;-webkit-text-stroke:0.3px #222;">Neutral</div>
<svg class="ic" style="left:1148px;top:114px" width="14" height="14" viewBox="0 0 14 14"><circle cx="7" cy="7" r="6" fill="none" stroke="#222" stroke-width="1.1"/><circle cx="5" cy="5.6" r=".9" fill="#222"/><circle cx="9" cy="5.6" r=".9" fill="#222"/><path d="M4.6 9H9.4" stroke="#222" stroke-width="1.1"/></svg>
<div class="a" style="left:1050px;top:150.9px;font-size:9.5px;letter-spacing:0.18px;line-height:12px;color:#333;font-weight:normal;-webkit-text-stroke:0.3px #333;-webkit-text-stroke:0.25px currentColor;">Priority</div>
<div class="a" style="left:1141px;top:145px;width:34px;height:21px;border:1.5px solid #555;border-radius:11px;background:#e2e2ea"></div>
<div class="a" style="left:1145px;top:149px;width:13px;height:13px;border-radius:50%;background:#666"></div>
<div class="a" style="left:1050px;top:184.9px;font-size:9.5px;letter-spacing:0.18px;line-height:12px;color:#333;font-weight:normal;-webkit-text-stroke:0.3px #333;-webkit-text-stroke:0.25px currentColor;">Watchers</div>
<div class="a" style="left:1141px;top:175px;width:129px;height:30px;border:1px solid #d8d8e0;border-radius:3px;background:#fff"></div>
<svg class="ic" style="left:1254px;top:188px" width="8" height="4" viewBox="0 0 8 4"><path d="M0 0H8L4 4Z" fill="#666"/></svg>
<div class="a" style="left:1148px;top:184.9px;font-size:10.45px;letter-spacing:0.198px;line-height:12px;color:#999;font-weight:normal;-webkit-text-stroke:0.3px #999;">Add watchers</div>
<div class="a" style="left:1050px;top:222.9px;font-size:9.5px;letter-spacing:0.18px;line-height:12px;color:#333;font-weight:normal;-webkit-text-stroke:0.3px #333;-webkit-text-stroke:0.25px currentColor;">Inboxes</div>
<div class="a" style="left:1141px;top:213px;width:129px;height:30px;border:1px solid #d8d8e0;border-radius:3px;background:#fff"></div>
<svg class="ic" style="left:1254px;top:226px" width="8" height="4" viewBox="0 0 8 4"><path d="M0 0H8L4 4Z" fill="#666"/></svg>
<div class="a" style="left:1148px;top:222.9px;font-size:10.45px;letter-spacing:0.198px;line-height:12px;color:#999;font-weight:normal;-webkit-text-stroke:0.3px #999;">Add to inbox</div>
<svg class="ic" style="left:1052px;top:255px" width="12" height="12" viewBox="0 0 12 12"><rect x="0.6" y="0.6" width="10.8" height="10.8" rx="2" fill="none" stroke="#444" stroke-width="1.1"/><path d="M3.5 4.8L6 7.3L8.5 4.8" fill="none" stroke="#444" stroke-width="1.1"/></svg>
<div class="a" style="left:1069px;top:256.9px;font-size:9.5px;letter-spacing:0.18px;line-height:12px;color:#333;font-weight:normal;-webkit-text-stroke:0.3px #333;-webkit-text-stroke:0.25px currentColor;">Reason ...</div>
<div class="a" style="left:1141px;top:248px;width:129px;height:29px;border:1px solid #d8d8e0;border-radius:3px;background:#fff"></div>
<svg class="ic" style="left:1254px;top:260px" width="8" height="4" viewBox="0 0 8 4"><path d="M0 0H8L4 4Z" fill="#666"/></svg>
<svg class="ic" style="left:1052px;top:290px" width="12" height="12" viewBox="0 0 12 12"><circle cx="6" cy="6" r="5.5" fill="#6ab0e8"/><path d="M0.5 6H11.5M6 0.5V11.5M2 3H10M2 9H10" stroke="#d8ecfb" stroke-width=".7"/><ellipse cx="6" cy="6" rx="2.5" ry="5.5" fill="none" stroke="#d8ecfb" stroke-width=".7"/></svg>
<div class="a" style="left:1069px;top:291.9px;font-size:9.5px;letter-spacing:0.18px;line-height:12px;color:#333;font-weight:normal;-webkit-text-stroke:0.3px #333;-webkit-text-stroke:0.25px currentColor;">Region</div>
<div class="a" style="left:1141px;top:283px;width:129px;height:29px;border:1px solid #d8d8e0;border-radius:3px;background:#fff"></div>
<svg class="ic" style="left:1254px;top:295px" width="8" height="4" viewBox="0 0 8 4"><path d="M0 0H8L4 4Z" fill="#666"/></svg>
<svg class="ic" style="left:1055px;top:321px" width="8" height="8" viewBox="0 0 8 8"><path d="M4 0.5V7.5M0.5 4H7.5" stroke="#333" stroke-width="1"/></svg>
<div class="a" style="left:1070px;top:319.9px;font-size:9.5px;letter-spacing:0.18px;line-height:12px;color:#333;font-weight:normal;-webkit-text-stroke:0.3px #333;-webkit-text-stroke:0.25px currentColor;">Add Field</div>
<div class="a" style="left:1041px;top:346px;width:239px;height:1px;background:#dcdce4"></div>
<svg class="ic" style="left:1056px;top:362px" width="8" height="5" viewBox="0 0 8 5"><path d="M0.8 0.8L4 4L7.2 0.8" fill="none" stroke="#222" stroke-width="1.4"/></svg>
<svg class="ic" style="left:1075px;top:359px" width="13" height="13" viewBox="0 0 13 13"><rect x="0.7" y="0.7" width="11.6" height="11.6" rx="3" fill="none" stroke="#222" stroke-width="1.2"/><circle cx="6.5" cy="3.6" r="1.1" fill="#222"/><path d="M4 9.2Q4 6.4 6.5 6.4Q9 6.4 9 9.2Z" fill="none" stroke="#222" stroke-width="1.1" stroke-linejoin="round"/></svg>
<div class="a" style="left:1101px;top:359.9px;font-size:10.92px;letter-spacing:0.207px;line-height:12px;color:#222;font-weight:normal;-webkit-text-stroke:0.3px #222;-webkit-text-stroke:0.25px currentColor;">Contact details</div>
<div class="a" style="left:1052.5px;top:389.5px;width:15.0px;height:15.0px;border-radius:50%;background:#b9ee8f;color:#2a3a1a;font-size:6px;line-height:15.0px;text-align:center;letter-spacing:-0.2px;-webkit-text-stroke:0.3px #2a3a1a">AN</div>
<div class="a" style="left:1071px;top:390.9px;font-size:9.5px;letter-spacing:0.18px;line-height:12px;color:#222;font-weight:normal;-webkit-text-stroke:0.3px #222;">antonio_eddie22</div>
<svg class="ic" style="left:1249px;top:390px" width="11" height="11" viewBox="0 0 10 10"><rect x="0.6" y="0.6" width="8.8" height="8.8" rx="2.4" fill="none" stroke="url(#igg)" stroke-width="1.1"/><circle cx="5" cy="5" r="2" fill="none" stroke="url(#igg)" stroke-width="1.1"/><circle cx="7.4" cy="2.6" r=".55" fill="#b03aa0"/></svg>
<div class="a" style="left:1056px;top:430.9px;font-size:9.5px;letter-spacing:0.18px;line-height:12px;color:#333;font-weight:normal;-webkit-text-stroke:0.3px #333;-webkit-text-stroke:0.25px currentColor;">Full name</div>
<div class="a" style="left:1142px;top:422px;width:122px;height:29px;border:1px solid #d8d8e0;border-radius:3px;background:#fff;overflow:hidden"></div>
<div class="a" style="left:1149px;top:430px;width:111px;overflow:hidden;font-size:11.7px;line-height:14px;color:#222">antonio_eddie22</div>
<div class="a" style="left:1056px;top:465.9px;font-size:9.5px;letter-spacing:0.18px;line-height:12px;color:#333;font-weight:normal;-webkit-text-stroke:0.3px #333;-webkit-text-stroke:0.25px currentColor;">Email</div>
<div class="a" style="left:1142px;top:457px;width:122px;height:29px;border:1px solid #d8d8e0;border-radius:3px;background:#fff;overflow:hidden"></div>
<div class="a" style="left:1149px;top:465px;width:111px;overflow:hidden;font-size:11.7px;line-height:14px;color:#222">antonio_eddie22@rocketmail.com</div>
<div class="a" style="left:1056px;top:500.9px;font-size:9.5px;letter-spacing:0.18px;line-height:12px;color:#333;font-weight:normal;-webkit-text-stroke:0.3px #333;-webkit-text-stroke:0.25px currentColor;">Phone No.</div>
<div class="a" style="left:1142px;top:492px;width:122px;height:29px;border:1px solid #d8d8e0;border-radius:3px;background:#fff;overflow:hidden"></div>
<div class="a" style="left:1149px;top:500px;width:111px;overflow:hidden;font-size:11.7px;line-height:14px;color:#222">+1 3456789910</div>
<div class="a" style="left:1056px;top:534.9px;font-size:9.5px;letter-spacing:0.18px;line-height:12px;color:#333;font-weight:normal;-webkit-text-stroke:0.3px #333;-webkit-text-stroke:0.25px currentColor;">Tags</div>
<div class="a" style="left:1142px;top:526px;width:99px;height:25px;border:1px solid #dcdce4;border-radius:13px;background:#fff"></div>
<div class="a" style="left:1149px;top:532px;width:14px;height:13px;background:#d8cc50;border-radius:2px"></div>
<div class="a" style="left:1169px;top:533.9px;font-size:10.45px;letter-spacing:0.198px;line-height:12px;color:#222;font-weight:normal;-webkit-text-stroke:0.3px #222;">Spammer</div>
<svg class="ic" style="left:1224px;top:534px" width="9" height="9" viewBox="0 0 9 9"><path d="M1 1L8 8M8 1L1 8" stroke="#333" stroke-width="1.1"/></svg>
<div class="a" style="left:1142px;top:557px;width:66px;height:19px;border:1px solid #dcdce4;border-radius:3px;background:#fff"></div>
<svg class="ic" style="left:1150px;top:562px" width="8" height="8" viewBox="0 0 8 8"><path d="M4 0.5V7.5M0.5 4H7.5" stroke="#333" stroke-width="1"/></svg>
<div class="a" style="left:1161px;top:560.9px;font-size:9.5px;letter-spacing:0.18px;line-height:12px;color:#333;font-weight:normal;-webkit-text-stroke:0.3px #333;-webkit-text-stroke:0.25px currentColor;">Add tags</div>
<svg class="ic" style="left:1059px;top:592px" width="8" height="8" viewBox="0 0 8 8"><path d="M4 0.5V7.5M0.5 4H7.5" stroke="#333" stroke-width="1"/></svg>
<div class="a" style="left:1074px;top:590.9px;font-size:9.5px;letter-spacing:0.18px;line-height:12px;color:#333;font-weight:normal;-webkit-text-stroke:0.3px #333;-webkit-text-stroke:0.25px currentColor;">Add Field</div>
<div class="a" style="left:1041px;top:617px;width:239px;height:1px;background:#dcdce4"></div>
<svg class="ic" style="left:1056px;top:633px" width="8" height="5" viewBox="0 0 8 5"><path d="M0.8 0.8L4 4L7.2 0.8" fill="none" stroke="#222" stroke-width="1.4"/></svg>
<svg class="ic" style="left:1075px;top:629px" width="12" height="13" viewBox="0 0 12 13"><rect x="1" y="2" width="10" height="10.5" rx="1.5" fill="none" stroke="#222" stroke-width="1.1"/><rect x="3.5" y="0.8" width="5" height="2.4" rx=".6" fill="#fff" stroke="#222" stroke-width="1"/><path d="M3.5 6H8.5M3.5 8.2H8.5M3.5 10.3H6.5" stroke="#222" stroke-width="1"/></svg>
<div class="a" style="left:1101px;top:630.9px;font-size:10.45px;letter-spacing:0.198px;line-height:12px;color:#222;font-weight:normal;-webkit-text-stroke:0.3px #222;-webkit-text-stroke:0.25px currentColor;">Notes (1)</div>
<svg class="ic" style="left:1053px;top:654px" width="15" height="15" viewBox="0 0 20 20"><defs><clipPath id="nav"><circle cx="10" cy="10" r="10"/></clipPath></defs><g clip-path="url(#nav)"><rect width="20" height="20" fill="#3aa0c8"/><ellipse cx="10" cy="12" rx="7" ry="9" fill="#2a1a18"/><ellipse cx="10" cy="10.5" rx="3.8" ry="4.6" fill="#b07a5a"/><rect x="4" y="16" width="12" height="5" fill="#c0503a"/></g><circle cx="16" cy="16" r="3" fill="#2fb84a" stroke="#fff" stroke-width="1"/></svg>
<div class="a" style="left:1074px;top:655px;width:194px;height:80px;border:1px solid #d8d8e0;border-radius:4px;background:#fff"></div>
<div class="a" style="left:1080px;top:661.9px;font-size:11.21px;letter-spacing:0.212px;line-height:14px;color:#555;font-weight:normal;-webkit-text-stroke:0.3px #555;">Start typing @ to mention team</div>
<div class="a" style="left:1080px;top:676.9px;font-size:11.21px;letter-spacing:0.212px;line-height:14px;color:#555;font-weight:normal;-webkit-text-stroke:0.3px #555;">members</div>
<div class="a" style="left:1228px;top:669px;width:36px;height:36px;border-radius:50%;background:#2d5db3;box-shadow:0 1px 3px rgba(0,0,0,.25)"></div>
<svg class="ic" style="left:1237px;top:678px" width="18" height="18" viewBox="0 0 18 18"><path d="M3 1H15Q17 1 17 3V17L13.5 14.5H3Q1 14.5 1 12.5V3Q1 1 3 1Z" fill="#fff"/><path d="M5 9.5Q9 12 13 9.5" fill="none" stroke="#2d5db3" stroke-width="1.3" stroke-linecap="round"/></svg>
<div class="a" style="left:1258px;top:668px;width:13px;height:13px;border-radius:50%;background:#d23b30;border:1.5px solid #fff"></div>
<div class="a" style="left:1262px;top:669.9px;font-size:7.6px;letter-spacing:0.144px;line-height:12px;color:#fff;font-weight:normal;-webkit-text-stroke:0.3px #fff;">1</div><div class="a" style="left:0;top:0;width:1280px;height:1px;background:#a3a3a3"></div>
<div class="a" style="left:0;top:719px;width:1280px;height:1px;background:#d4d4d8"></div>
</body></html>
